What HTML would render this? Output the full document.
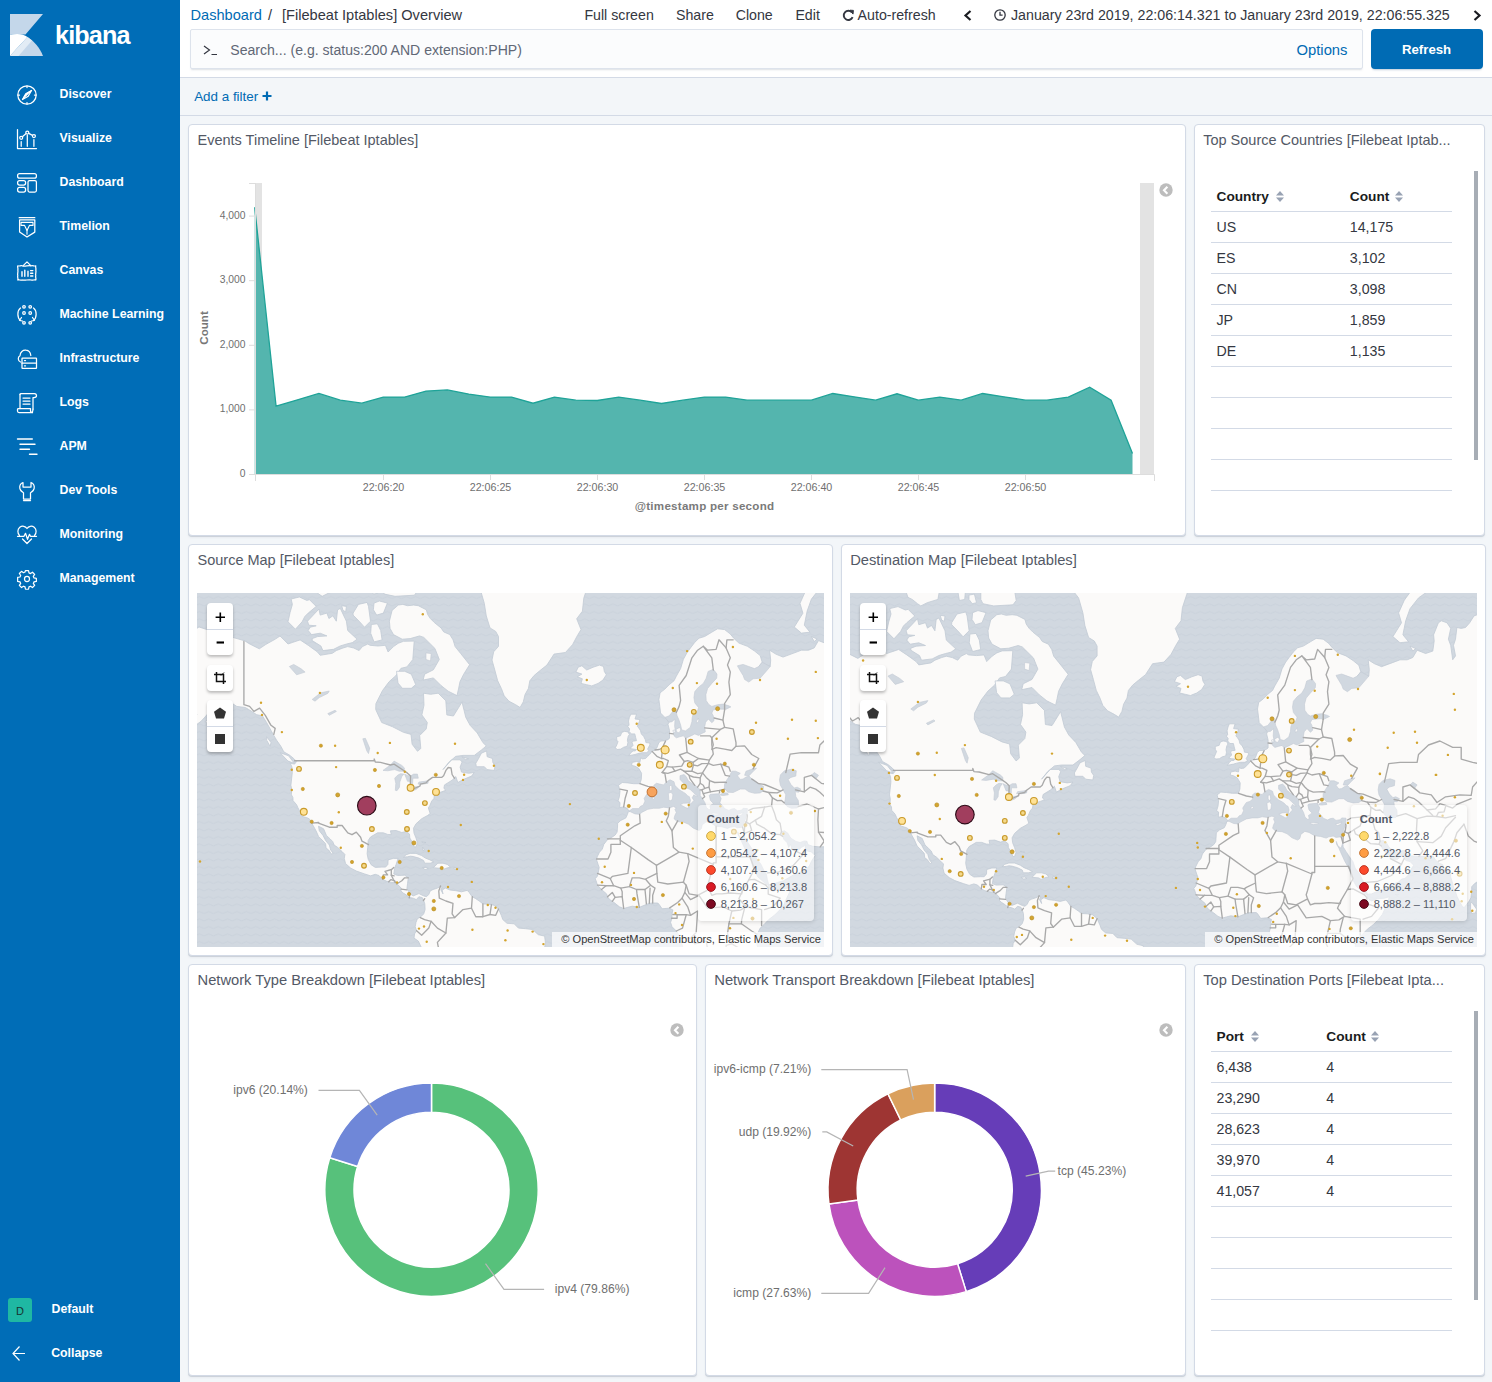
<!DOCTYPE html>
<html><head><meta charset="utf-8"><title>Kibana</title><style>
*{box-sizing:border-box;margin:0;padding:0}
html,body{width:1492px;height:1382px;overflow:hidden;background:#F3F6F9;font-family:"Liberation Sans",sans-serif;color:#343741}
.t{position:absolute;white-space:nowrap;line-height:1}
svg{position:absolute;overflow:visible}
#nav{position:absolute;left:0;top:0;width:180px;height:1382px;background:#006DB7}
#hdr{position:absolute;left:180px;top:0;width:1312px;height:78px;background:#fff;border-bottom:1px solid #D3DAE6}
#fbar{position:absolute;left:180px;top:78px;width:1312px;height:38px;background:#F3F6F9;border-bottom:1px solid #D3DAE6}
.panel{position:absolute;background:#fff;border:1px solid #D3DAE6;border-radius:4px;box-shadow:0 1px 0 rgba(152,162,179,0.35),0 2px 2px rgba(152,162,179,0.12)}
</style></head>
<body>
<div id="hdr"></div>
<div id="fbar"></div>
<div class="t" style="left:190.5px;top:7.64px;font-size:14.6px;color:#006BB4;">Dashboard</div>
<div class="t" style="left:268px;top:7.64px;font-size:14.6px;color:#343741;">/</div>
<div class="t" style="left:282px;top:7.64px;font-size:14.6px;color:#343741;">[Filebeat Iptables] Overview</div>
<div class="t" style="left:584.4px;top:7.98px;font-size:14.2px;color:#343741;">Full screen</div>
<div class="t" style="left:676px;top:7.98px;font-size:14.2px;color:#343741;">Share</div>
<div class="t" style="left:735.7px;top:7.98px;font-size:14.2px;color:#343741;">Clone</div>
<div class="t" style="left:795.4px;top:7.98px;font-size:14.2px;color:#343741;">Edit</div>
<div class="t" style="left:857.6px;top:7.98px;font-size:14.2px;color:#343741;">Auto-refresh</div>
<svg style="left:841.5px;top:8.5px" width="13" height="13" viewBox="0 0 13 13" fill="none" stroke="#343741" stroke-width="1.9"><path d="M10.6 8.2A4.6 4.6 0 1 1 9.9 3.4"/><path d="M8 1.2L11.4 1.4 11 5.1Z" fill="#343741" stroke-width="1"/></svg>
<svg style="left:963px;top:9.5px" width="10" height="11" viewBox="0 0 10 11" fill="none" stroke="#1a1c21" stroke-width="2.2"><path d="M7.5 1L2.5 5.5 7.5 10"/></svg>
<svg style="left:1472px;top:9.5px" width="10" height="11" viewBox="0 0 10 11" fill="none" stroke="#1a1c21" stroke-width="2.2"><path d="M2.5 1L7.5 5.5 2.5 10"/></svg>
<svg style="left:994px;top:9px" width="12" height="12" viewBox="0 0 12 12" fill="none" stroke="#343741" stroke-width="1.3"><circle cx="6" cy="6" r="5.2"/><path d="M6 2.8V6.2H8.6"/></svg>
<div class="t" style="left:1011px;top:7.96px;font-size:14.22px;color:#343741;">January 23rd 2019, 22:06:14.321 to January 23rd 2019, 22:06:55.325</div>
<div style="position:absolute;left:190px;top:29px;width:1173px;height:40px;background:#FBFCFD;border:1px solid #DDE3EC;border-radius:2px;box-shadow:0 2px 2px -1px rgba(152,162,179,0.35)"></div>
<svg style="left:203px;top:45px" width="15" height="10" viewBox="0 0 15 10" fill="none" stroke="#343741" stroke-width="1.2"><path d="M1 1L6.5 5 1 9M8.5 9.5H14"/></svg>
<div class="t" style="left:230.3px;top:43.39px;font-size:14.07px;color:#616876;">Search... (e.g. status:200 AND extension:PHP)</div>
<div class="t" style="left:1296.5px;top:42.97px;font-size:14.8px;color:#006BB4;">Options</div>
<div style="position:absolute;left:1371px;top:29px;width:112px;height:40px;background:#006BB4;border-radius:4px;box-shadow:0 2px 2px -1px rgba(39,87,131,0.3)"></div>
<div class="t" style="left:1402px;top:42.83px;font-size:13.2px;color:#fff;font-weight:bold;">Refresh</div>
<div class="t" style="left:194.2px;top:89.66px;font-size:13.4px;color:#006BB4;">Add a filter</div>
<svg style="left:261.5px;top:90.5px" width="10" height="10" viewBox="0 0 10 10" fill="none" stroke="#006BB4" stroke-width="2.2"><path d="M5 0.5V9.5M0.5 5H9.5"/></svg>
<div id="nav">
<svg style="left:10px;top:14px" width="33" height="42" viewBox="0 0 33 42"><path d="M0 0H33L15.5 20.5C7 20.5 3 20.5 0 21Z" fill="#C4D7EA"/><path d="M0 21C7 19 13.5 20 17.5 23 L0 42Z" fill="#fff"/><path d="M17.5 23C24 27 30 34 33 42H0Z" fill="#C4D7EA"/><path d="M17.5 23L0 42H8.5L22 26.5C20.5 25.2 19 24 17.5 23Z" fill="#E2ECF5"/></svg>
<div class="t" style="left:55px;top:23.27px;font-size:25.2px;color:#fff;font-weight:bold;letter-spacing:-0.85px;">kibana</div>
<svg style="left:17px;top:84.6px" width="20" height="20" viewBox="0 0 20 20" fill="none" stroke="#fff" stroke-width="1.25" stroke-linecap="round" stroke-linejoin="round"><circle cx="10" cy="10" r="9.2"/><path d="M10 1v1.5M10 17.5V19M1 10h1.5M17.5 10H19"/><path d="M14.5 5.5L11.2 11.2 5.5 14.5 8.8 8.8Z" fill="#fff" fill-opacity="0.0"/><path d="M14.5 5.5L8.8 8.8 5.5 14.5Z" fill="#fff" stroke-width="0.8"/></svg>
<div class="t" style="left:59.5px;top:87.59px;font-size:12.3px;color:#fff;font-weight:bold;">Discover</div>
<svg style="left:17px;top:128.6px" width="20" height="20" viewBox="0 0 20 20" fill="none" stroke="#fff" stroke-width="1.25" stroke-linecap="round" stroke-linejoin="round"><path d="M0.5 0.5V19.5H19.5"/><path d="M4.2 12.5V17.3M10.3 6.2V17.3M16.9 10.6V17.3"/><path d="M4.2 8.8L10.3 3.6 16.9 7.1"/><circle cx="4.2" cy="8.8" r="1.5" fill="#006DB7"/><circle cx="10.3" cy="3.6" r="1.5" fill="#006DB7"/><circle cx="16.9" cy="7.1" r="1.5" fill="#006DB7"/></svg>
<div class="t" style="left:59.5px;top:131.59px;font-size:12.3px;color:#fff;font-weight:bold;">Visualize</div>
<svg style="left:17px;top:172.6px" width="20" height="20" viewBox="0 0 20 20" fill="none" stroke="#fff" stroke-width="1.25" stroke-linecap="round" stroke-linejoin="round"><rect x="0.6" y="0.6" width="18.8" height="4.6" rx="2"/><rect x="0.6" y="7.6" width="8" height="4.4" rx="2"/><rect x="0.6" y="14.4" width="8" height="4.6" rx="2"/><rect x="11" y="7.6" width="8.4" height="11.4" rx="1.5"/></svg>
<div class="t" style="left:59.5px;top:175.59px;font-size:12.3px;color:#fff;font-weight:bold;">Dashboard</div>
<svg style="left:17px;top:216.6px" width="20" height="20" viewBox="0 0 20 20" fill="none" stroke="#fff" stroke-width="1.25" stroke-linecap="round" stroke-linejoin="round"><path d="M2.2 0.7h15.6"/><path d="M2.6 2.9h15.2v12.2L10 20 2.6 15.1Z"/><path d="M4 5.4H16V8.4H12.4L10 13.6 7.6 8.4H4Z" stroke-width="1.1"/><path d="M10 13.6V17.2" stroke-width="1.1"/></svg>
<div class="t" style="left:59.5px;top:219.59px;font-size:12.3px;color:#fff;font-weight:bold;">Timelion</div>
<svg style="left:17px;top:260.6px" width="20" height="20" viewBox="0 0 20 20" fill="none" stroke="#fff" stroke-width="1.25" stroke-linecap="round" stroke-linejoin="round"><path d="M6.2 4.6L10 0.9 13.8 4.6"/><path d="M0.8 4.8c1.5 0.8 3-0.8 4.5 0 3 0.9 6-0.9 9 0 1.5-0.8 3 0.8 4.5 0-0.7 1.5 0.7 2.8 0 4.2 0.7 2.2-0.7 4 0 5.8-0.7 1.5 0.7 2.8 0 4.2-1.5-0.8-3 0.8-4.5 0-3-0.9-6 0.9-9 0-1.5 0.8-3-0.8-4.5 0 0.7-1.5-0.7-2.8 0-4.2-0.7-2.2 0.7-4 0-5.8 0.7-1.5-0.7-2.8 0-4.2Z"/><path d="M5 10.7v4.6M7.8 9.1v6.2M11 10.2v5.1M13.6 9.6h2.2M13.6 12.3h2.2M13.6 15h2.2" stroke-width="1.4"/></svg>
<div class="t" style="left:59.5px;top:263.59px;font-size:12.3px;color:#fff;font-weight:bold;">Canvas</div>
<svg style="left:17px;top:304.6px" width="20" height="20" viewBox="0 0 20 20" fill="none" stroke="#fff" stroke-width="1.25" stroke-linecap="round" stroke-linejoin="round"><circle cx="7" cy="1.8" r="1.3"/><circle cx="13.2" cy="1.8" r="1.3"/><circle cx="7" cy="8" r="1.3"/><circle cx="13.2" cy="8" r="1.3"/><circle cx="7" cy="17.8" r="1.3"/><circle cx="13.2" cy="17.8" r="1.3"/><path d="M3.5 3C0 5.5 0 13 3.5 15.5M4.5 12.5L2.5 15.5 5.5 16"/><path d="M16.5 3C20 5.5 20 13 16.5 15.5M15.5 12.5L17.5 15.5 14.5 16"/></svg>
<div class="t" style="left:59.5px;top:307.59px;font-size:12.3px;color:#fff;font-weight:bold;">Machine Learning</div>
<svg style="left:17px;top:348.6px" width="20" height="20" viewBox="0 0 20 20" fill="none" stroke="#fff" stroke-width="1.25" stroke-linecap="round" stroke-linejoin="round"><path d="M3.5 13C0.8 12 0.5 8 3 6.8 3 3 6 0.8 9 1.2 12 1.5 13.5 4 13.8 6.5"/><rect x="5" y="9" width="14.5" height="10.4" rx="0.5"/><path d="M5 14.2h14.5M7.5 11.6h1M7.5 16.8h1"/></svg>
<div class="t" style="left:59.5px;top:351.59px;font-size:12.3px;color:#fff;font-weight:bold;">Infrastructure</div>
<svg style="left:17px;top:392.6px" width="20" height="20" viewBox="0 0 20 20" fill="none" stroke="#fff" stroke-width="1.25" stroke-linecap="round" stroke-linejoin="round"><path d="M3 1.5C3 0.8 3.5 0.5 4 0.5H17.5C18.8 0.5 19.5 1.5 19.5 2.8 19.5 4 18.5 4.5 17 4.5H16V16"/><path d="M3 1.5V15.5"/><path d="M0.5 16.5C0.5 15.8 1 15.5 1.5 15.5H13.5V17.5C13.5 18.5 14.5 19.5 15.5 19.5H2C1 19.5 0.5 18.8 0.5 18Z"/><path d="M16 16C16 18 15 19.5 15.5 19.5"/><path d="M6 5h7M6 8h7M6 11h7"/></svg>
<div class="t" style="left:59.5px;top:395.59px;font-size:12.3px;color:#fff;font-weight:bold;">Logs</div>
<svg style="left:17px;top:436.6px" width="20" height="20" viewBox="0 0 20 20" fill="none" stroke="#fff" stroke-width="1.25" stroke-linecap="round" stroke-linejoin="round"><path d="M0.5 2h14.8M3 7.3h15M3 12.2h9.5M12.5 17.3h7.5" stroke-width="1.4"/></svg>
<div class="t" style="left:59.5px;top:439.59px;font-size:12.3px;color:#fff;font-weight:bold;">APM</div>
<svg style="left:17px;top:480.6px" width="20" height="20" viewBox="0 0 20 20" fill="none" stroke="#fff" stroke-width="1.25" stroke-linecap="round" stroke-linejoin="round"><path d="M6 1.5C3.5 2.5 2.5 5 2.8 7.2 3.2 9.5 5 11 6.5 11.7V18h7v-6.3c1.5-0.7 3.3-2.2 3.7-4.5C17.5 5 16.5 2.5 14 1.5V6H6Z"/><path d="M6.5 19.5h7"/></svg>
<div class="t" style="left:59.5px;top:483.59px;font-size:12.3px;color:#fff;font-weight:bold;">Dev Tools</div>
<svg style="left:17px;top:524.6px" width="20" height="20" viewBox="0 0 20 20" fill="none" stroke="#fff" stroke-width="1.25" stroke-linecap="round" stroke-linejoin="round"><path d="M2.5 10.5C0.3 8.5 0.3 4.2 2.8 2.2 5.3 0.3 8.5 1.2 10 3.5 11.5 1.2 14.7 0.3 17.2 2.2 19.7 4.2 19.7 8.5 17.5 10.5"/><path d="M0.5 11.3h6.5l1.5-3 2 6 2-5 1 2H19.5"/><path d="M5.5 14L10 18.5 14.5 14"/></svg>
<div class="t" style="left:59.5px;top:527.59px;font-size:12.3px;color:#fff;font-weight:bold;">Monitoring</div>
<svg style="left:17px;top:568.6px" width="20" height="20" viewBox="0 0 20 20" fill="none" stroke="#fff" stroke-width="1.25" stroke-linecap="round" stroke-linejoin="round"><g transform="translate(10 10) scale(0.9) translate(-10 -10)"><path d="M8.3 0.6h3.4l0.5 2.6 1.7 0.8 2.2-1.5 2.4 2.4-1.5 2.2 0.8 1.7 2.6 0.5v3.4l-2.6 0.5-0.8 1.7 1.5 2.2-2.4 2.4-2.2-1.5-1.7 0.8-0.5 2.6H8.3l-0.5-2.6-1.7-0.8-2.2 1.5-2.4-2.4 1.5-2.2-0.8-1.7-2.6-0.5V8.3l2.6-0.5 0.8-1.7-1.5-2.2 2.4-2.4 2.2 1.5 1.7-0.8Z" stroke-width="1.35"/><circle cx="10" cy="10" r="2.8" stroke-width="1.35"/></g></svg>
<div class="t" style="left:59.5px;top:571.59px;font-size:12.3px;color:#fff;font-weight:bold;">Management</div>
<div style="position:absolute;left:8px;top:1298px;width:24px;height:24px;border-radius:3px;background:#1FB8A3"></div>
<div class="t" style="left:20px;transform:translateX(-50%);top:1305.69px;font-size:11px;color:#18342F;">D</div>
<div class="t" style="left:51.6px;top:1302.59px;font-size:12.3px;color:#fff;font-weight:bold;">Default</div>
<svg style="left:12px;top:1345px" width="14" height="17" viewBox="0 0 14 17" fill="none" stroke="#fff" stroke-width="1.2"><path d="M13 8.5H1M7.5 1.5L1 8.5 7.5 15.5"/></svg>
<div class="t" style="left:51.2px;top:1346.79px;font-size:12.3px;color:#fff;font-weight:bold;">Collapse</div>
</div>
<div class="panel" style="left:188px;top:124px;width:998px;height:412px"></div><div class="t" style="left:197.5px;top:132.93px;font-size:14.5px;color:#535966;">Events Timeline [Filebeat Iptables]</div>
<div class="panel" style="left:1194px;top:124px;width:291px;height:412px"></div><div class="t" style="left:1203.2px;top:132.93px;font-size:14.5px;color:#535966;">Top Source Countries [Filebeat Iptab...</div>
<div class="panel" style="left:188px;top:544px;width:645px;height:412px"></div><div class="t" style="left:197.5px;top:552.93px;font-size:14.5px;color:#535966;">Source Map [Filebeat Iptables]</div>
<div class="panel" style="left:841px;top:544px;width:645px;height:412px"></div><div class="t" style="left:850.2px;top:552.74px;font-size:14.72px;color:#535966;">Destination Map [Filebeat Iptables]</div>
<div class="panel" style="left:188px;top:964px;width:509px;height:412px"></div><div class="t" style="left:197.5px;top:972.74px;font-size:14.72px;color:#535966;">Network Type Breakdown [Filebeat Iptables]</div>
<div class="panel" style="left:705px;top:964px;width:481px;height:412px"></div><div class="t" style="left:714.2px;top:972.65px;font-size:14.82px;color:#535966;">Network Transport Breakdown [Filebeat Iptables]</div>
<div class="panel" style="left:1194px;top:964px;width:291px;height:412px"></div><div class="t" style="left:1203.2px;top:972.76px;font-size:14.7px;color:#535966;">Top Destination Ports [Filebeat Ipta...</div>
<div style="position:absolute;left:255px;top:183px;width:7px;height:291px;background:#E3E3E3"></div>
<div style="position:absolute;left:1140px;top:183px;width:14px;height:291px;background:#E3E3E3"></div>
<svg style="left:0;top:0" width="1492" height="1382" viewBox="0 0 1492 1382"><path d="M254.7,474 L254.7,207.3 L276.1,406.2 L297.5,399.8 L318.9,393.5 L340.3,400.2 L361.8,403.2 L383.2,397.1 L404.6,397.1 L426.0,391.1 L447.4,389.9 L468.8,394.1 L490.2,397.1 L511.6,397.1 L533.0,403.2 L554.4,397.1 L575.8,400.2 L597.3,400.5 L618.7,397.1 L640.1,400.2 L661.5,403.5 L682.9,400.2 L704.3,397.1 L725.7,397.1 L747.1,400.2 L768.5,400.2 L790.0,400.2 L811.4,400.2 L832.8,393.5 L854.2,396.8 L875.6,400.2 L897.0,393.8 L918.4,400.2 L939.8,397.1 L961.2,400.2 L982.6,393.5 L1004.0,396.8 L1025.5,400.2 L1046.9,400.2 L1068.3,397.1 L1089.7,387.2 L1111.1,400.2 L1132.5,453.4 L1132.5,474Z" fill="#54B5AE"/><polyline points="254.7,207.3 276.1,406.2 297.5,399.8 318.9,393.5 340.3,400.2 361.8,403.2 383.2,397.1 404.6,397.1 426.0,391.1 447.4,389.9 468.8,394.1 490.2,397.1 511.6,397.1 533.0,403.2 554.4,397.1 575.8,400.2 597.3,400.5 618.7,397.1 640.1,400.2 661.5,403.5 682.9,400.2 704.3,397.1 725.7,397.1 747.1,400.2 768.5,400.2 790.0,400.2 811.4,400.2 832.8,393.5 854.2,396.8 875.6,400.2 897.0,393.8 918.4,400.2 939.8,397.1 961.2,400.2 982.6,393.5 1004.0,396.8 1025.5,400.2 1046.9,400.2 1068.3,397.1 1089.7,387.2 1111.1,400.2 1132.5,453.4" fill="none" stroke="#1FA398" stroke-width="1.3"/><path d="M255.5 183V474.5H1154.5V481M249 183.5H255.5" fill="none" stroke="#DDDDDD" stroke-width="1"/></svg>
<svg style="left:0;top:0" width="1492" height="1382" viewBox="0 0 1492 1382" fill="none" stroke="#DDDDDD" stroke-width="1"><path d="M249 474.5H255"/><path d="M249 409.9H255"/><path d="M249 345.3H255"/><path d="M249 280.7H255"/><path d="M249 216.1H255"/><path d="M383.5 474V480"/><path d="M490.5 474V480"/><path d="M597.5 474V480"/><path d="M704.5 474V480"/><path d="M811.5 474V480"/><path d="M918.5 474V480"/><path d="M1025.5 474V480"/><path d="M255.5 474V481"/></svg>
<div class="t" style="right:1246.5px;top:468.98px;font-size:10.3px;color:#6F6F6F;">0</div>
<div class="t" style="right:1246.5px;top:404.38px;font-size:10.3px;color:#6F6F6F;">1,000</div>
<div class="t" style="right:1246.5px;top:339.78px;font-size:10.3px;color:#6F6F6F;">2,000</div>
<div class="t" style="right:1246.5px;top:275.18px;font-size:10.3px;color:#6F6F6F;">3,000</div>
<div class="t" style="right:1246.5px;top:210.58px;font-size:10.3px;color:#6F6F6F;">4,000</div>
<div class="t" style="left:383.5px;transform:translateX(-50%);top:482.44px;font-size:10.7px;color:#6F6F6F;">22:06:20</div>
<div class="t" style="left:490.5px;transform:translateX(-50%);top:482.44px;font-size:10.7px;color:#6F6F6F;">22:06:25</div>
<div class="t" style="left:597.5px;transform:translateX(-50%);top:482.44px;font-size:10.7px;color:#6F6F6F;">22:06:30</div>
<div class="t" style="left:704.5px;transform:translateX(-50%);top:482.44px;font-size:10.7px;color:#6F6F6F;">22:06:35</div>
<div class="t" style="left:811.5px;transform:translateX(-50%);top:482.44px;font-size:10.7px;color:#6F6F6F;">22:06:40</div>
<div class="t" style="left:918.5px;transform:translateX(-50%);top:482.44px;font-size:10.7px;color:#6F6F6F;">22:06:45</div>
<div class="t" style="left:1025.5px;transform:translateX(-50%);top:482.44px;font-size:10.7px;color:#6F6F6F;">22:06:50</div>
<div class="t" style="left:704.5px;transform:translateX(-50%);top:500.28px;font-size:11.6px;color:#7A7A7A;font-weight:bold;letter-spacing:0.25px;">@timestamp per second</div>
<div class="t" style="left:203.5px;top:328.4px;font-size:11.6px;color:#777777;font-weight:bold;transform:translate(-50%,-50%) rotate(-90deg)">Count</div>
<svg style="left:1159.3px;top:182.8px" width="14" height="14" viewBox="0 0 14 14"><circle cx="7" cy="7" r="6.7" fill="#BDBDBD"/><path d="M8.4 3.7L5 7.3l3.4 3.4" fill="none" stroke="#fff" stroke-width="2.1"/></svg>
<div class="t" style="left:1216.5px;top:189.60px;font-size:13.7px;color:#1a1c21;font-weight:bold;">Country</div>
<svg style="left:1275.5px;top:190.7px" width="8" height="11" viewBox="0 0 8 11" fill="#98A2B3"><path d="M4 0L8 4.6H0Z"/><path d="M4 11L8 6.4H0Z"/></svg>
<div class="t" style="left:1349.8px;top:189.60px;font-size:13.7px;color:#1a1c21;font-weight:bold;">Count</div>
<svg style="left:1394.8px;top:190.7px" width="8" height="11" viewBox="0 0 8 11" fill="#98A2B3"><path d="M4 0L8 4.6H0Z"/><path d="M4 11L8 6.4H0Z"/></svg>
<svg style="left:0;top:0" width="1492" height="1382" fill="none" stroke="#D3DAE6" stroke-width="1"><path d="M1211 211.5H1452"/><path d="M1211 242.5H1452"/><path d="M1211 273.5H1452"/><path d="M1211 304.5H1452"/><path d="M1211 335.5H1452"/><path d="M1211 366.5H1452"/><path d="M1211 397.5H1452"/><path d="M1211 428.5H1452"/><path d="M1211 459.5H1452"/><path d="M1211 490.5H1452"/></svg>
<div class="t" style="left:1216.5px;top:220.28px;font-size:14.2px;color:#343741;">US</div>
<div class="t" style="left:1349.8px;top:220.28px;font-size:14.2px;color:#343741;">14,175</div>
<div class="t" style="left:1216.5px;top:251.28px;font-size:14.2px;color:#343741;">ES</div>
<div class="t" style="left:1349.8px;top:251.28px;font-size:14.2px;color:#343741;">3,102</div>
<div class="t" style="left:1216.5px;top:282.28px;font-size:14.2px;color:#343741;">CN</div>
<div class="t" style="left:1349.8px;top:282.28px;font-size:14.2px;color:#343741;">3,098</div>
<div class="t" style="left:1216.5px;top:313.28px;font-size:14.2px;color:#343741;">JP</div>
<div class="t" style="left:1349.8px;top:313.28px;font-size:14.2px;color:#343741;">1,859</div>
<div class="t" style="left:1216.5px;top:344.28px;font-size:14.2px;color:#343741;">DE</div>
<div class="t" style="left:1349.8px;top:344.28px;font-size:14.2px;color:#343741;">1,135</div>
<div style="position:absolute;left:1474px;top:171.0px;width:4px;height:289px;background:#A7ADB5;border-radius:0"></div>
<div class="t" style="left:1216.5px;top:1029.60px;font-size:13.7px;color:#1a1c21;font-weight:bold;">Port</div>
<svg style="left:1251.0px;top:1030.7px" width="8" height="11" viewBox="0 0 8 11" fill="#98A2B3"><path d="M4 0L8 4.6H0Z"/><path d="M4 11L8 6.4H0Z"/></svg>
<div class="t" style="left:1326.3px;top:1029.60px;font-size:13.7px;color:#1a1c21;font-weight:bold;">Count</div>
<svg style="left:1371.3px;top:1030.7px" width="8" height="11" viewBox="0 0 8 11" fill="#98A2B3"><path d="M4 0L8 4.6H0Z"/><path d="M4 11L8 6.4H0Z"/></svg>
<svg style="left:0;top:0" width="1492" height="1382" fill="none" stroke="#D3DAE6" stroke-width="1"><path d="M1211 1051.5H1452"/><path d="M1211 1082.5H1452"/><path d="M1211 1113.5H1452"/><path d="M1211 1144.5H1452"/><path d="M1211 1175.5H1452"/><path d="M1211 1206.5H1452"/><path d="M1211 1237.5H1452"/><path d="M1211 1268.5H1452"/><path d="M1211 1299.5H1452"/><path d="M1211 1330.5H1452"/></svg>
<div class="t" style="left:1216.5px;top:1060.28px;font-size:14.2px;color:#343741;">6,438</div>
<div class="t" style="left:1326.3px;top:1060.28px;font-size:14.2px;color:#343741;">4</div>
<div class="t" style="left:1216.5px;top:1091.28px;font-size:14.2px;color:#343741;">23,290</div>
<div class="t" style="left:1326.3px;top:1091.28px;font-size:14.2px;color:#343741;">4</div>
<div class="t" style="left:1216.5px;top:1122.28px;font-size:14.2px;color:#343741;">28,623</div>
<div class="t" style="left:1326.3px;top:1122.28px;font-size:14.2px;color:#343741;">4</div>
<div class="t" style="left:1216.5px;top:1153.28px;font-size:14.2px;color:#343741;">39,970</div>
<div class="t" style="left:1326.3px;top:1153.28px;font-size:14.2px;color:#343741;">4</div>
<div class="t" style="left:1216.5px;top:1184.28px;font-size:14.2px;color:#343741;">41,057</div>
<div class="t" style="left:1326.3px;top:1184.28px;font-size:14.2px;color:#343741;">4</div>
<div style="position:absolute;left:1474px;top:1011.0px;width:4px;height:289px;background:#A7ADB5;border-radius:0"></div>
<svg style="left:0;top:0" width="1492" height="1382"><path d="M431.50,1083.10 A106.7,106.7 0 1 1 329.74,1157.72 L357.59,1166.50 A77.5,77.5 0 1 0 431.50,1112.30Z" fill="#57C17B" stroke="#fff" stroke-width="1.5"/><path d="M329.74,1157.72 A106.7,106.7 0 0 1 431.50,1083.10 L431.50,1112.30 A77.5,77.5 0 0 0 357.59,1166.50Z" fill="#6F87D8" stroke="#fff" stroke-width="1.5"/><polyline points="318.5,1090.4 359.4,1090.4 377.2,1115.2" fill="none" stroke="#B5B5B5" stroke-width="1.2"/><polyline points="544.1,1289.3 504,1289.3 485.5,1263.7" fill="none" stroke="#B5B5B5" stroke-width="1.2"/></svg>
<div class="t" style="right:1184.1px;top:1084.26px;font-size:12.1px;color:#6F6F6F;">ipv6 (20.14%)</div>
<div class="t" style="left:554.8px;top:1283.16px;font-size:12.1px;color:#6F6F6F;">ipv4 (79.86%)</div>
<svg style="left:669.6px;top:1022.8px" width="14" height="14" viewBox="0 0 14 14"><circle cx="7" cy="7" r="6.7" fill="#BDBDBD"/><path d="M8.4 3.7L5 7.3l3.4 3.4" fill="none" stroke="#fff" stroke-width="2.1"/></svg>
<svg style="left:0;top:0" width="1492" height="1382"><path d="M934.70,1083.00 A106.7,106.7 0 0 1 966.20,1291.64 L957.58,1263.75 A77.5,77.5 0 0 0 934.70,1112.20Z" fill="#663DB8" stroke="#fff" stroke-width="1.5"/><path d="M966.20,1291.64 A106.7,106.7 0 0 1 828.96,1204.00 L857.90,1200.09 A77.5,77.5 0 0 0 957.58,1263.75Z" fill="#BC52BC" stroke="#fff" stroke-width="1.5"/><path d="M828.96,1204.00 A106.7,106.7 0 0 1 887.94,1093.79 L900.74,1120.04 A77.5,77.5 0 0 0 857.90,1200.09Z" fill="#9E3533" stroke="#fff" stroke-width="1.5"/><path d="M887.94,1093.79 A106.7,106.7 0 0 1 934.63,1083.00 L934.65,1112.20 A77.5,77.5 0 0 0 900.74,1120.04Z" fill="#DAA05D" stroke="#fff" stroke-width="1.5"/><polyline points="821.3,1069.6 907.1,1069.6 913.5,1099.7" fill="none" stroke="#B5B5B5" stroke-width="1.2"/><polyline points="822.3,1131.9 826.7,1131.9 853.2,1146" fill="none" stroke="#B5B5B5" stroke-width="1.2"/><polyline points="1055.2,1171.1 1048.5,1171.1 1025.7,1176.2" fill="none" stroke="#B5B5B5" stroke-width="1.2"/><polyline points="821.3,1293.4 868.6,1293.4 885,1267.6" fill="none" stroke="#B5B5B5" stroke-width="1.2"/></svg>
<div class="t" style="right:680.7px;top:1063.46px;font-size:12.1px;color:#6F6F6F;">ipv6-icmp (7.21%)</div>
<div class="t" style="right:680.7px;top:1125.76px;font-size:12.1px;color:#6F6F6F;">udp (19.92%)</div>
<div class="t" style="left:1057.6px;top:1164.96px;font-size:12.1px;color:#6F6F6F;">tcp (45.23%)</div>
<div class="t" style="right:680.7px;top:1287.26px;font-size:12.1px;color:#6F6F6F;">icmp (27.63%)</div>
<svg style="left:1158.8px;top:1022.9000000000001px" width="14" height="14" viewBox="0 0 14 14"><circle cx="7" cy="7" r="6.7" fill="#BDBDBD"/><path d="M8.4 3.7L5 7.3l3.4 3.4" fill="none" stroke="#fff" stroke-width="2.1"/></svg>
<svg width="0" height="0" style="left:0;top:0"><defs><pattern id="waves" width="9.4" height="7.5" patternUnits="userSpaceOnUse"><path d="M0 4.5 Q2.35 2.5 4.7 4.5 T9.4 4.5" fill="none" stroke="#C4CCD6" stroke-width="0.9" opacity="0.6"/></pattern><g id="world"><g fill="#FBFAF9" stroke="#C2CAD4" stroke-width="0.8"><path d="M34.1,262.4L39.8,238.1L51.2,227.5L66.0,218.0L79.6,222.4L96.7,227.5L110.9,231.6L110.9,231.2L115.6,234.4L126.3,239.8L132.7,235.5L142.4,230.1L147.0,227.0L151.0,230.9L155.0,235.0L159.1,233.6L167.1,230.9L175.2,236.3L184.5,243.0L187.2,246.3L199.3,244.3L203.3,241.6L210.0,239.0L214.7,237.6L220.7,239.0L226.1,241.6L229.4,237.6L234.8,235.0L237.0,236.3L245.0,237.0L252.4,236.3L255.1,243.0L260.5,237.6L265.2,234.3L270.5,232.3L281.2,232.1L279.8,250.5L273.9,257.9L268.0,259.3L262.8,266.7L256.2,272.6L249.5,281.5L242.9,294.7L242.7,300.5L248.7,313.5L259.6,317.8L270.4,323.3L278.0,325.4L279.1,335.2L284.5,342.3L287.8,339.5L286.7,326.5L293.2,320.0L294.3,313.5L288.9,305.9L291.0,296.1L290.5,284.2L297.6,285.3L305.2,284.2L312.8,291.8L313.8,305.9L320.4,307.0L325.8,298.3L329.0,293.0L332.8,308.4L337.1,316.3L344.2,323.9L349.9,333.6L353.3,336.9L348.4,341.0L341.3,346.4L330.0,346.4L322.8,347.3L315.7,353.4L310.0,360.6L318.6,350.8L327.1,350.8L329.1,353.0L327.1,358.1L328.5,363.1L335.6,364.3L341.3,363.5L338.5,367.1L331.4,370.0L324.8,373.5L322.8,367.6L319.1,371.2L311.5,375.9L310.9,379.4L312.9,381.3L308.6,382.8L301.5,385.4L300.9,389.5L298.7,392.1L296.7,396.8L295.3,398.9L297.2,404.6L294.4,406.6L288.7,409.7L283.0,414.8L280.5,419.2L281.0,424.1L283.0,429.0L284.4,433.8L283.0,437.9L281.3,437.9L279.3,433.1L276.8,429.0L276.5,425.1L273.1,422.5L268.8,423.5L263.1,421.5L257.4,421.8L258.3,425.7L254.6,425.4L250.3,423.8L244.6,423.8L237.5,428.0L235.2,431.5L234.7,438.5L234.1,444.7L235.2,450.3L238.1,455.7L242.3,458.4L248.9,458.1L252.6,458.1L254.9,455.4L255.1,450.9L260.3,449.4L265.1,449.4L263.1,455.4L261.7,459.0L260.8,465.0L264.5,466.5L271.6,466.2L275.3,468.8L274.5,474.7L273.9,479.9L277.3,484.9L280.2,486.9L285.9,484.6L290.7,486.9L293.5,487.7L295.8,485.4L297.2,482.0L300.1,480.5L304.4,479.1L307.2,477.6L309.2,478.5L307.8,480.8L310.0,484.9L309.2,481.1L312.3,479.1L317.2,481.1L322.8,481.7L328.5,482.8L334.2,481.4L336.2,483.4L339.1,487.7L342.8,489.7L347.0,492.6L349.9,494.9L355.6,495.2L361.2,496.3L365.5,500.0L368.4,506.6L369.8,510.6L374.0,514.3L381.2,514.8L385.4,519.1L392.5,519.7L399.6,520.5L405.3,525.7L411.6,527.1L412.4,533.4L411.6,539.1L406.8,544.9L402.5,550.8L341.3,552.2L291.6,552.2L294.4,549.3L292.4,546.4L288.7,539.1L285.3,532.0L281.0,529.1L281.6,524.8L283.6,521.7L282.2,517.7L283.0,513.4L284.4,509.7L287.9,507.7L290.7,504.9L292.1,500.6L291.8,494.9L290.7,491.5L289.3,488.6L285.9,487.7L283.3,490.6L280.2,489.2L275.9,488.3L273.9,486.3L270.2,484.0L267.9,482.0L268.2,479.1L264.5,475.3L263.1,473.8L257.4,473.2L253.2,472.1L249.7,470.3L246.0,466.5L242.3,465.3L237.5,466.8L231.8,465.0L223.3,462.0L217.6,459.0L212.5,454.5L211.3,449.4L211.9,445.4L209.1,442.6L204.8,438.5L201.1,436.0L199.7,432.5L197.1,429.9L193.4,426.4L190.6,419.8L185.5,417.2L186.3,421.8L190.0,426.4L192.6,431.5L196.3,436.0L197.7,441.0L200.2,444.4L198.5,445.1L195.7,441.0L193.1,439.1L192.6,434.7L187.7,429.6L185.5,427.4L182.9,421.5L180.1,416.5L178.6,413.8L176.9,410.4L174.9,409.1L169.0,407.3L167.8,403.9L165.0,398.9L163.6,395.7L160.1,391.7L159.9,388.4L158.4,385.8L158.7,380.1L157.9,376.3L159.3,363.5L159.0,358.1L157.3,354.3L161.6,355.1L163.6,352.5L160.7,349.5L156.4,346.0L150.8,342.8L147.9,337.3L143.6,331.2L140.8,326.4L138.0,321.4L133.7,313.7L129.4,306.8L123.7,305.7L118.0,301.9L112.4,298.5L103.8,297.4L96.7,292.8L89.6,295.7L85.3,300.2L81.1,301.9L79.6,294.5L81.1,291.6L76.8,300.2L74.0,305.7L68.3,312.1L62.6,316.3L56.9,319.9L51.2,322.9L44.1,326.4L51.2,319.9L55.5,316.3L61.2,311.1L64.0,305.2L59.7,303.5L52.6,305.2L50.6,298.5L44.1,294.5L41.2,288.6L39.8,282.6L44.1,278.2L51.2,276.3L54.0,269.8L46.9,269.8L39.8,269.2L37.0,265.1L34.1,262.4Z"/><path d="M158.1,190.0L166.4,188.0L173.8,191.4L176.5,190.7L183.2,197.4L175.2,204.1L171.8,207.5L169.1,212.8L162.4,220.2L155.0,212.8L157.1,203.4L159.4,195.4Z"/><path d="M174.5,212.2L185.9,200.1L187.2,206.1L193.9,204.1L195.9,209.5L199.9,206.8L203.3,212.2L204.6,200.8L207.3,199.4L213.4,212.2L214.7,221.5L224.1,230.2L219.4,233.6L214.0,234.9L207.3,236.9L200.6,240.3L189.9,241.6L187.9,237.0L179.2,231.6L179.2,229.6L184.5,227.6L193.9,226.9L187.2,224.2L178.5,225.6L175.2,221.5L177.2,218.2L183.2,216.8L175.8,216.2Z"/><path d="M173.1,169.0L208.5,169.0L206.3,180.8L195.6,184.1L189.2,187.3L185.9,185.1L180.6,180.8L176.3,178.7Z"/><path d="M208.7,196.7L213.4,197.4L212.7,202.8L210.0,201.4Z"/><path d="M220.1,204.1L225.4,195.4L234.1,193.4L235.5,197.4L237.5,212.2L231.5,218.2L226.1,212.2L220.1,206.1Z"/><path d="M241.0,194.1L246.4,192.0L254.4,194.1L250.4,204.1L243.7,206.1L240.4,200.8Z"/><path d="M238.3,215.5L244.4,214.8L247.7,221.5L249.1,230.9L241.0,232.9L237.7,224.2Z"/><path d="M249.2,169.0L282.5,169.0L284.6,181.9L281.4,186.2L262.1,187.3L251.3,185.1L249.2,180.8Z"/><path d="M225.6,169.0L234.2,169.0L233.1,180.8L227.8,181.9Z"/><path d="M237.4,176.5L242.8,175.5L244.9,184.1L240.6,185.1L237.4,180.8Z"/><path d="M256.4,212.2L259.1,201.4L265.2,196.1L269.8,195.4L274.5,196.7L280.6,196.1L285.3,196.7L293.3,200.8L294.6,205.4L297.3,209.5L301.3,213.5L308.0,218.9L310.7,222.9L316.8,225.6L320.1,230.9L322.1,237.6L327.5,244.3L336.6,255.7L330.7,265.2L327.0,272.6L325.5,280.0L324.0,286.6L315.2,282.2L307.8,276.3L300.4,268.9L290.1,271.1L291.6,265.2L300.4,260.8L306.3,250.5L301.9,239.4L290.8,228.4L286.6,226.9L277.2,229.6L269.2,230.2L260.5,225.6L257.1,219.5Z"/><path d="M263.5,262.3L271.7,262.3L278.3,265.2L282.7,275.6L278.3,279.3L269.4,279.3L265.0,274.1Z"/><path d="M387.1,298.5L382.6,295.7L376.0,292.2L371.2,286.8L368.4,279.5L364.7,271.8L361.8,261.0L359.0,251.0L360.7,242.8L365.5,237.3L365.5,227.5L362.7,222.4L357.0,218.9L353.3,207.0L351.3,194.3L347.0,179.3L339.9,170.2L328.5,166.6L317.2,163.0L308.6,154.2L304.4,142.1L312.9,127.6L324.3,111.6L341.3,88.4L369.8,72.2L398.2,51.9L426.7,44.5L455.1,67.9L472.2,88.4L463.6,115.0L458.0,137.9L460.8,158.0L455.1,176.0L450.8,189.1L449.4,202.2L443.7,209.8L448.0,220.6L444.3,226.7L439.5,235.7L432.4,243.5L421.0,245.1L413.9,256.1L406.8,261.7L401.1,266.5L396.8,271.8L395.4,279.5L392.0,285.6L390.3,292.8L387.1,298.5Z"/><path d="M442.9,263.1L445.2,258.2L448.9,256.8L453.7,261.0L460.2,258.2L466.5,256.1L470.5,257.5L471.3,262.4L473.3,265.8L469.9,271.1L465.1,274.4L458.8,276.9L453.7,275.7L448.0,274.4L449.4,269.8L444.3,267.8L448.9,265.1L442.9,263.1Z"/><path d="M343.3,357.7L351.3,357.7L354.1,360.6L361.2,361.4L362.1,356.8L359.8,353.4L359.5,349.5L354.1,347.7L353.6,341.9L348.4,344.2L345.6,349.5L342.8,354.3L343.3,357.7Z"/><path d="M328.8,347.7L335.6,349.9L332.8,350.8L328.8,347.7Z"/><path d="M147.1,343.7L155.6,346.8L161.3,354.3L155.0,352.1L147.1,343.7Z"/><path d="M133.7,327.8L138.0,333.6L137.1,337.3L133.7,331.2L133.7,327.8Z"/><path d="M71.7,312.7L79.1,309.5L75.4,314.8L71.7,312.7Z"/><path d="M270.5,448.1L273.1,445.7L277.3,444.4L283.0,444.4L288.7,446.6L292.4,449.1L297.0,450.9L300.9,453.0L297.2,454.2L291.6,454.2L290.7,451.5L285.9,449.1L280.2,447.5L277.3,447.2L274.5,447.8L270.5,448.1Z"/><path d="M300.4,458.7L304.9,454.2L310.0,454.2L314.3,455.4L317.4,458.1L312.9,459.3L309.5,460.8L307.2,459.3L300.4,458.7Z"/><path d="M289.3,458.7L293.0,458.4L295.3,459.9L292.1,460.5L289.3,458.7Z"/><path d="M320.9,458.4L325.4,458.7L324.8,459.9L320.9,459.9L320.9,458.4Z"/><path d="M288.7,432.8L293.0,433.5L290.7,433.8L288.7,432.8Z"/><path d="M289.6,438.2L291.6,440.7L290.1,441.6L289.6,438.2Z"/><path d="M496.1,402.1L494.1,399.3L490.7,397.9L486.7,398.6L487.0,393.5L485.0,392.1L486.4,387.7L487.0,382.0L485.5,376.3L489.2,373.5L494.9,373.9L500.6,374.7L506.9,374.7L508.3,370.4L508.6,364.3L505.7,359.3L502.0,357.2L498.6,356.4L499.2,353.4L503.5,352.5L506.9,353.4L507.7,348.6L509.2,349.9L512.6,349.5L514.8,347.3L516.6,345.5L519.1,342.4L522.0,341.0L523.9,338.7L525.7,334.0L527.6,332.1L531.6,331.7L534.8,330.7L536.5,329.3L536.5,321.4L535.0,315.3L535.9,313.2L531.9,308.4L527.6,304.1L526.8,297.4L525.9,290.4L527.1,283.8L531.9,280.1L536.2,275.7L541.0,271.8L543.3,267.2L547.6,259.6L550.4,250.3L554.1,243.5L557.5,238.9L561.8,233.3L566.0,229.2L571.7,227.5L578.8,223.2L584.5,219.8L591.6,220.6L597.3,225.0L600.7,229.2L605.9,234.1L614.4,237.3L621.5,242.0L627.2,246.6L629.2,253.2L625.8,257.5L637.2,257.5L637.7,251.0L636.6,241.2L642.8,245.1L650.0,248.1L664.2,242.8L668.4,241.2L675.6,241.2L681.2,238.9L685.5,231.6L694.0,234.9L701.2,232.5L702.6,222.4L702.0,216.2L706.8,204.2L709.7,202.2L715.4,204.2L719.1,209.8L716.8,220.6L719.1,226.7L721.1,241.2L723.9,237.3L721.9,226.7L723.9,220.6L725.3,208.9L729.6,209.8L733.9,208.9L738.1,204.2L742.4,197.3L756.6,192.2L759.5,181.6L773.7,176.0L796.4,164.2L796.4,465.9L780.8,465.9L776.5,456.9L774.5,450.9L772.3,446.3L769.4,447.2L766.6,448.1L763.7,448.4L759.5,449.4L758.0,453.3L753.8,455.4L749.5,459.9L746.1,462.9L743.0,465.0L740.1,468.2L740.1,473.2L739.3,479.1L737.6,482.5L734.4,486.6L732.7,488.9L731.0,488.3L728.2,483.4L725.3,477.6L723.9,473.2L721.9,468.8L720.5,462.9L719.1,458.4L719.1,453.9L716.8,450.9L712.5,450.9L711.1,446.0L707.7,444.7L704.0,441.6L701.2,437.3L694.0,437.6L686.9,437.9L679.8,437.3L675.0,435.7L673.8,432.2L672.1,434.4L672.4,440.1L674.7,442.0L678.4,442.9L682.1,446.6L678.4,452.4L676.4,456.9L673.3,459.9L669.9,460.5L667.0,463.5L660.5,465.9L655.6,468.8L650.5,471.8L644.3,473.5L640.0,475.3L635.4,475.6L635.2,479.1L640.0,482.3L645.7,480.2L652.8,479.6L657.6,478.2L656.5,483.4L653.7,489.2L650.8,495.8L647.1,500.6L641.4,506.3L635.7,510.6L630.9,515.7L627.2,519.1L623.8,526.2L623.8,534.8L625.8,542.0L626.6,546.4L627.2,555.2L549.0,555.2L547.6,549.3L550.4,543.5L549.5,537.1L547.0,529.1L546.1,526.2L543.3,522.0L539.0,517.7L537.6,513.4L539.0,509.2L539.0,504.9L539.9,500.9L536.2,499.2L531.9,499.5L529.1,499.8L526.2,495.5L524.8,494.0L519.1,494.0L516.3,494.3L512.0,496.0L506.3,498.3L499.2,497.2L494.9,498.3L490.7,499.5L486.4,497.8L482.1,494.3L479.3,492.3L476.4,490.3L474.5,487.7L473.6,484.9L470.8,482.5L468.5,480.5L464.5,476.2L463.1,471.8L462.2,469.7L464.2,467.4L465.1,464.4L466.2,458.4L465.1,455.4L463.6,450.9L464.2,447.8L466.5,443.2L469.3,440.1L470.8,435.4L474.5,430.6L477.9,429.0L482.1,426.1L484.1,423.1L484.4,419.8L484.7,414.2L487.8,411.4L492.7,409.1L494.4,405.6L495.2,402.8L496.9,402.5Z"/><path d="M495.8,346.8L499.2,346.0L502.0,345.5L504.9,344.6L509.2,343.7L513.4,343.7L516.0,341.9L514.6,340.1L516.8,335.9L516.8,334.0L512.9,333.6L512.3,330.7L510.6,327.3L508.3,324.9L507.4,321.4L505.7,318.9L504.3,317.3L506.3,312.7L506.9,310.6L502.0,310.0L503.5,305.2L497.8,305.2L496.4,308.4L495.5,312.1L496.1,316.3L494.6,317.3L496.6,319.9L496.1,322.4L498.3,324.9L501.8,324.9L502.6,328.3L503.5,331.7L500.6,332.1L498.9,333.1L500.1,336.4L498.3,338.2L497.2,339.6L500.1,340.1L503.5,340.5L502.3,341.9L500.1,341.9L497.8,343.7L495.8,346.8Z"/><path d="M494.1,337.3L494.9,333.6L494.4,331.2L495.2,327.3L496.4,325.4L494.9,322.9L491.5,322.4L488.7,323.4L487.5,326.8L483.6,327.8L483.8,331.2L485.0,332.6L483.8,335.9L482.4,338.7L484.1,340.5L487.8,340.1L490.7,338.2L494.1,337.3Z"/><path d="M661.3,218.0L669.9,204.2L667.0,194.3L672.7,181.6L682.7,167.8L694.0,161.8L706.8,158.0L699.7,170.2L686.9,179.3L678.4,190.1L674.1,202.2L671.3,216.2L677.0,223.2L668.4,224.1L661.3,218.0Z"/><path d="M678.4,227.5L684.1,230.0L681.2,232.5L678.4,227.5Z"/><path d="M739.0,484.0L740.4,484.0L745.0,490.6L743.8,494.3L740.1,494.9L739.0,490.6L739.0,484.0Z"/><path d="M663.6,475.9L667.0,475.9L665.6,477.0L663.6,475.9Z"/><path d="M543.3,130.6L560.4,111.6L583.1,108.3L588.8,130.6L571.7,151.6L554.7,158.0L543.3,130.6Z"/></g><g fill="#D1D8E0" stroke="#C2CAD4" stroke-width="0.6"><path d="M496.1,402.1L499.5,399.6L505.7,399.6L507.7,397.1L510.0,396.4L512.0,392.1L511.1,389.5L513.4,385.8L514.8,383.9L518.3,382.8L521.1,380.5L520.8,376.3L523.4,374.3L526.8,375.1L530.5,375.9L533.3,373.1L537.0,370.8L541.0,372.7L541.9,376.3L543.9,378.6L547.0,381.3L550.4,383.2L552.7,384.7L554.7,386.9L556.4,387.7L557.5,391.4L556.7,394.3L557.8,395.0L559.2,393.2L560.9,391.4L559.2,388.8L560.9,385.8L563.2,387.3L564.6,387.3L560.4,383.5L557.2,380.5L552.7,378.6L550.7,374.3L547.0,370.4L547.0,366.7L551.0,365.5L553.2,367.6L555.2,371.6L558.6,374.3L562.1,376.3L564.6,378.2L567.2,380.9L567.2,386.5L569.5,389.5L572.0,393.9L573.4,398.6L576.0,400.7L577.7,400.3L576.9,396.8L579.4,395.3L580.3,394.3L577.4,391.4L576.3,386.5L577.1,385.4L580.3,385.1L586.0,384.7L586.8,386.9L588.2,389.5L586.8,393.9L589.7,396.8L591.6,399.6L595.9,401.4L598.8,400.0L601.6,399.6L604.4,401.8L608.7,401.1L610.1,399.3L614.4,399.6L614.1,405.6L613.0,408.4L611.6,412.5L610.1,416.5L609.6,418.2L604.4,418.8L601.6,417.5L597.3,418.2L594.5,419.5L588.8,417.8L583.1,417.2L577.4,413.8L573.2,412.8L569.2,415.8L568.3,419.8L566.0,421.5L560.4,419.2L555.5,415.2L550.4,413.1L546.1,412.8L543.3,411.8L541.0,409.7L541.9,406.3L543.3,403.5L541.9,400.3L543.3,398.9L540.4,397.5L536.2,398.9L530.5,398.2L526.2,399.3L520.5,399.3L514.8,400.3L509.2,403.2L506.3,405.3L502.0,404.9L496.9,402.5Z"/><path d="M594.8,383.2L600.2,383.5L607.3,380.1L612.1,380.1L615.8,382.8L621.5,384.3L627.2,383.9L630.0,382.0L630.6,377.4L625.8,374.7L621.5,371.2L618.1,369.2L616.1,367.1L613.0,368.0L610.1,370.0L607.3,370.4L604.4,366.7L607.3,364.3L602.5,362.2L598.8,362.2L596.5,367.1L593.9,370.8L591.6,375.1L591.4,379.4L594.8,383.2Z"/><path d="M611.6,366.3L616.1,366.7L620.7,361.8L623.5,359.3L620.1,359.8L613.0,362.2L611.6,366.3Z"/><path d="M587.4,386.2L590.2,386.5L595.3,385.8L594.5,383.9L590.2,383.9L587.4,385.4L587.4,386.2Z"/><path d="M651.4,361.8L647.4,365.9L646.5,371.2L647.4,376.3L650.2,380.9L652.8,385.8L652.2,390.6L651.4,393.9L654.2,397.5L658.5,399.3L664.2,398.9L665.6,396.8L665.3,391.4L662.8,387.7L662.2,382.8L665.6,383.2L667.9,380.1L664.2,378.2L661.3,379.0L657.9,375.5L655.1,370.4L657.9,368.4L662.8,367.1L663.3,361.8L658.5,360.2L651.4,361.8Z"/><path d="M678.4,366.3L682.7,370.0L685.5,366.3L681.2,363.5L678.4,366.3Z"/><path d="M604.7,422.8L605.0,425.7L607.3,429.6L608.7,432.8L613.0,442.3L616.1,447.8L618.1,451.5L619.8,458.4L622.4,463.5L624.9,468.0L629.2,471.8L632.6,474.7L635.2,476.2L635.7,475.3L634.3,470.3L633.5,465.3L630.9,461.4L628.1,455.4L623.5,449.4L621.5,443.2L618.1,438.5L614.4,432.8L611.6,428.3L611.3,424.1L610.1,427.4L609.6,429.6L606.4,427.4L604.7,422.8Z"/><path d="M672.1,434.4L671.3,436.9L668.4,438.5L665.6,441.0L661.3,441.0L658.8,440.4L657.6,435.4L655.6,438.5L654.2,433.8L650.8,430.3L648.8,424.8L648.5,422.5L651.4,421.8L654.8,424.1L657.1,428.0L658.5,429.6L662.8,432.2L667.0,433.5L671.3,431.9L673.8,432.2L672.1,434.4Z"/><path d="M531.9,308.4L536.2,306.8L539.3,303.0L541.9,299.1L543.3,303.0L544.1,306.8L545.8,310.6L547.6,315.8L548.7,320.9L552.4,321.9L557.2,318.4L558.9,312.7L559.2,308.4L560.4,304.6L564.6,301.9L565.5,298.5L561.8,293.9L560.9,288.6L561.8,282.6L565.5,278.2L570.3,274.4L573.2,269.2L575.1,262.4L580.3,260.3L584.0,265.1L583.7,269.2L578.8,274.4L574.6,279.5L572.9,285.6L573.2,291.6L576.0,295.7L578.8,297.4L584.5,295.7L590.2,295.1L595.9,296.8L597.9,297.9L593.1,300.2L587.4,300.2L580.3,300.8L578.8,304.1L580.3,306.8L581.1,311.6L578.8,313.7L575.4,310.0L572.6,313.2L571.7,317.8L572.3,322.9L568.9,324.4L565.5,326.4L561.8,324.9L558.9,326.4L552.7,329.3L550.4,326.8L546.7,327.8L543.3,328.8L541.0,326.8L540.4,323.9L542.4,321.4L541.6,317.3L541.9,312.7L541.9,310.0L539.0,312.7L535.9,313.2L531.9,308.4Z"/><path d="M604.4,256.8L610.1,255.4L615.8,257.5L621.5,259.6L625.8,257.5L629.2,253.2L637.2,257.5L634.3,261.0L627.2,269.2L620.1,269.8L615.8,273.1L611.6,270.5L610.1,266.5L605.9,259.6L604.4,256.8Z"/><path d="M293.0,243.9L298.2,244.6L297.5,252.0L293.0,250.5Z" fill="#FBFAF9"/><path d="M250.0,361.4L254.6,361.8L261.7,360.6L266.0,362.2L271.1,362.2L271.4,358.9L268.8,356.4L261.1,352.1L257.4,356.0L250.0,361.4Z"/><path d="M262.3,381.3L264.0,381.7L266.5,378.2L266.8,373.1L268.8,367.6L270.8,365.1L267.4,364.7L264.5,366.3L261.7,369.2L262.8,374.3L262.3,381.3Z"/><path d="M271.6,365.1L274.8,366.7L277.3,367.1L280.7,365.1L284.4,365.1L285.3,369.2L279.9,369.2L279.6,374.7L277.6,376.3L277.3,372.3L274.5,372.3L271.6,365.1Z"/><path d="M274.8,381.3L278.8,382.0L283.0,380.5L287.3,377.0L283.6,377.8L280.2,377.8L275.6,379.7L274.8,381.3Z"/><path d="M285.0,375.1L290.1,375.1L295.0,374.3L295.3,371.6L291.6,372.3L285.9,373.1L285.0,375.1Z"/><path d="M229.8,329.8L232.4,329.3L236.7,339.2L235.5,344.6L233.8,341.9L229.8,329.8Z"/><path d="M156.4,257.5L160.7,255.4L167.8,259.6L172.1,263.1L163.6,265.8L156.4,257.5Z"/><path d="M179.2,290.4L187.7,283.8L196.3,282.0L194.8,284.4L186.3,288.6L182.0,292.2L179.2,290.4Z"/><path d="M194.8,304.6L202.0,301.3L203.4,302.4L196.3,306.3L194.8,304.6Z"/></g><g fill="#FBFAF9" stroke="#C2CAD4" stroke-width="0.6"><path d="M547.3,395.7L550.4,394.3L556.4,393.9L555.0,399.6L552.7,398.6L547.3,395.7Z"/><path d="M535.3,384.3L538.2,383.2L539.9,385.8L539.3,390.6L537.3,391.7L535.9,391.4L535.3,384.3Z"/><path d="M536.5,376.7L538.7,376.3L539.0,380.1L538.2,382.4L536.5,380.5L536.5,376.7Z"/><path d="M578.8,403.9L581.7,404.2L586.8,404.6L586.0,405.6L581.7,406.0L578.8,404.9L578.8,403.9Z"/><path d="M603.9,405.6L607.3,404.6L610.4,403.2L608.7,406.0L605.6,407.0L603.9,405.6Z"/><path d="M518.8,389.1L521.1,388.0L522.0,389.1L520.2,390.3L518.8,389.1Z"/><path d="M543.0,320.4L546.7,318.4L547.8,320.9L546.1,323.9L543.6,322.9L543.0,320.4Z"/><path d="M539.9,321.4L541.9,320.9L542.4,323.4L540.4,323.4L539.9,321.4Z"/><path d="M563.5,312.1L565.5,309.0L565.8,312.1L564.1,314.2L563.5,312.1Z"/></g><g fill="none" stroke="#A9A9A9" stroke-width="1.35" stroke-linejoin="round" stroke-linecap="round"><path d="M161.6,351.7L241.2,351.7L241.2,349.9L242.3,353.0L247.5,353.4L257.4,356.0L261.1,355.1L271.1,361.8L274.2,363.9L277.6,367.1L277.3,376.3L275.6,379.7L277.3,380.9L281.6,379.4L287.0,377.0L287.3,375.1L293.0,373.9L295.0,371.6L299.5,368.4L308.6,368.4L310.6,366.7L312.9,361.4L315.2,358.5L318.0,358.9L319.1,365.5L321.4,369.2"/><path d="M110.9,232.5L110.9,295.7L116.6,297.4L120.9,302.4L126.6,299.1L132.3,306.3L138.0,316.3L142.2,319.4L140.8,325.4"/><path d="M178.9,414.2L185.7,413.5L185.5,414.2L196.3,418.2L204.2,418.2L204.2,416.5L209.1,416.5L214.8,423.8L219.0,425.7L223.3,423.1L227.6,428.3L229.0,432.2L235.5,435.7"/><path d="M249.7,470.3L250.3,465.9L254.6,465.9L252.0,462.3L258.6,460.5L260.8,458.4"/><path d="M258.3,460.5L258.3,466.2L261.1,466.8"/><path d="M255.7,472.7L258.0,470.6L261.7,471.8L262.3,473.5"/><path d="M258.3,466.2L260.3,470.3L262.3,473.5"/><path d="M263.7,475.0L268.8,471.8L271.6,468.8L275.3,468.8"/><path d="M268.2,480.2L273.9,480.8"/><path d="M276.2,488.9L277.0,484.6"/><path d="M291.8,489.7L290.4,491.5"/><path d="M307.5,477.0L305.8,482.0L306.3,489.2L312.9,492.0L320.0,494.3L319.1,504.9L321.7,508.6L314.3,509.2L312.9,524.0"/><path d="M287.3,508.6L291.6,510.6L298.1,512.3L304.4,519.1L312.9,524.0L304.4,533.4L305.8,540.6L314.3,543.5"/><path d="M283.6,521.7L288.7,526.2L295.8,519.1L298.1,512.3"/><path d="M321.7,508.6L330.0,500.6L338.5,499.2L339.3,487.7"/><path d="M338.5,499.2L342.8,507.7L349.9,507.7L349.9,494.9"/><path d="M349.9,507.7L357.0,505.5L358.4,495.8"/><path d="M357.0,505.5L362.7,506.3L365.5,500.0"/><path d="M506.9,374.7L514.8,377.4L521.1,378.6"/><path d="M487.0,380.1L494.4,381.7L492.1,389.5L490.7,397.9"/><path d="M519.1,342.4L523.9,347.3L528.5,349.5L530.5,349.5L535.3,351.7L533.6,357.7L529.1,363.5L531.9,364.7L533.3,373.1"/><path d="M522.0,341.0L526.2,340.5L529.1,339.2L532.5,332.1"/><path d="M528.5,349.5L529.1,343.7L529.1,339.2"/><path d="M536.5,324.4L540.2,324.9"/><path d="M552.7,329.3L554.1,343.3L546.4,346.0L551.3,352.5L548.7,357.2L539.3,358.1L533.6,357.7"/><path d="M539.3,358.1L541.9,362.2L547.6,360.2L551.0,362.2L558.9,362.2L560.4,356.0L560.1,353.4L554.7,351.7L551.3,352.5"/><path d="M529.1,363.5L534.8,364.3L541.9,362.2"/><path d="M554.1,343.3L558.9,346.0L565.5,349.5L576.3,351.2L580.3,345.1L578.8,335.9L578.8,328.8L576.9,326.8L567.5,326.8"/><path d="M560.1,353.4L565.5,349.5"/><path d="M560.4,356.0L564.6,356.8L568.9,354.7L575.4,354.3L576.3,351.2"/><path d="M558.9,362.2L564.6,364.7L569.5,363.9L575.4,354.3"/><path d="M569.5,363.9L573.2,368.4L576.6,371.6L581.7,373.5L591.6,373.1L593.4,373.5"/><path d="M575.4,354.3L580.3,356.4L587.7,355.1L592.2,366.3L596.5,367.1"/><path d="M576.6,371.6L576.0,378.2L577.4,382.8L586.5,381.3L591.6,380.1"/><path d="M586.5,381.3L586.5,383.9"/><path d="M551.0,362.2L556.1,366.3L560.4,368.0L567.2,368.8L569.5,363.9"/><path d="M556.1,366.3L556.9,369.6L561.8,376.3"/><path d="M567.2,368.8L567.2,374.3L564.6,378.2"/><path d="M567.2,374.3L570.3,376.3L571.7,379.4L568.9,380.9L567.2,380.9"/><path d="M571.7,379.4L576.0,378.2"/><path d="M568.9,380.9L570.3,384.7L571.7,387.7L569.5,389.5"/><path d="M570.3,384.7L577.4,382.8"/><path d="M578.8,328.8L587.4,320.4L591.6,318.4L589.9,311.1L591.6,300.8"/><path d="M571.7,318.9L587.4,320.4"/><path d="M581.1,309.0L589.9,311.1"/><path d="M591.6,300.8L591.6,294.5L597.3,285.6L595.9,273.1L597.3,263.1L594.5,256.1L597.3,248.8L593.1,238.9L593.9,230.8L600.2,230.8"/><path d="M580.3,261.0L578.8,248.8L570.3,237.3L574.6,241.2L583.1,240.4L586.0,230.8L593.1,238.9"/><path d="M543.3,303.5L546.1,297.4L547.6,291.6L546.1,276.3L553.2,266.5L558.9,248.8L564.6,241.2L570.3,237.3"/><path d="M578.8,328.8L580.3,335.9L578.8,340.5L583.1,338.7L591.6,340.1L598.8,341.5L603.0,337.3L611.6,336.9L618.7,345.5L625.8,349.5L620.1,359.8"/><path d="M591.6,318.4L600.2,319.9L603.0,333.6L603.0,337.3"/><path d="M587.7,355.1L595.9,358.1L597.3,362.2"/><path d="M615.8,401.4L620.1,399.3L631.5,398.2"/><path d="M630.0,382.0L635.7,383.5L639.4,388.8L638.6,396.8L631.5,398.2"/><path d="M618.7,370.0L625.8,374.7L631.5,375.5L642.8,380.1L647.4,382.0"/><path d="M635.7,383.5L644.3,383.9L650.0,380.9"/><path d="M639.4,388.8L644.3,391.7L648.5,391.4L651.4,393.9"/><path d="M631.5,398.2L628.6,407.3L622.4,411.1L616.7,414.8L613.5,413.5L614.4,407.0L614.1,405.6"/><path d="M622.4,411.1L623.8,415.2L631.5,419.2L639.1,425.1L644.3,425.4L647.4,425.7L648.5,422.5"/><path d="M647.4,425.7L649.7,427.4"/><path d="M638.6,396.8L641.4,403.9L643.4,410.8L647.1,414.2L648.5,422.5"/><path d="M616.7,414.8L618.7,421.5L611.6,424.4"/><path d="M613.0,412.5L611.6,417.5L611.3,424.1"/><path d="M609.6,418.2L611.3,424.1"/><path d="M634.3,463.8L645.7,462.9L659.9,456.9L669.9,445.7L672.4,440.1"/><path d="M658.8,440.1L669.9,445.7"/><path d="M665.3,397.5L674.1,395.0L685.5,400.0L684.9,410.8L685.5,423.1L691.2,432.2L687.2,437.9"/><path d="M685.5,400.0L695.5,397.5L704.9,397.9L714.0,399.3L723.9,397.1"/><path d="M685.5,423.1L701.2,424.1L709.7,417.5L714.0,409.1L723.9,398.6"/><path d="M706.8,442.6L714.0,440.1L722.5,422.5L725.3,414.2L732.4,405.6"/><path d="M732.4,405.6L736.7,417.5L742.4,422.5L762.3,430.6L773.7,429.6L787.9,429.0"/><path d="M762.3,430.6L763.7,435.4L765.2,447.8"/><path d="M773.7,429.6L775.1,438.5L772.3,441.6L774.5,450.9"/><path d="M662.5,380.9L671.3,382.8L671.3,368.4L678.4,366.3L688.4,374.3L699.7,376.3L705.4,383.9L714.0,378.2L728.2,376.3L739.6,376.7L741.0,368.4L748.1,360.2L755.2,360.2L760.3,351.2"/><path d="M652.8,363.5L657.1,345.1L668.4,343.7L685.5,343.7L686.9,335.9L696.9,326.4L708.3,322.4L721.1,328.8L729.6,328.8L729.6,340.5L741.0,343.7L752.4,346.0L760.3,351.2"/><path d="M671.3,382.8L677.0,378.2L682.7,380.1L686.9,383.2L695.5,391.4L701.2,396.8"/><path d="M695.5,391.4L704.0,390.3L708.3,385.1L714.0,386.9L721.1,389.5L725.3,385.8L739.6,380.1"/><path d="M704.9,397.9L706.8,393.9L712.5,393.2L714.0,388.0"/><path d="M506.6,405.3L507.2,414.2L501.8,416.8L487.3,426.7L487.3,431.2"/><path d="M474.5,429.9L487.3,429.9"/><path d="M487.3,431.2L487.3,435.4L477.9,435.4L477.9,443.2L475.0,450.0L463.6,450.0"/><path d="M487.3,431.2L498.3,438.5L515.4,450.9L523.4,456.3L546.1,443.2"/><path d="M498.3,438.5L494.9,464.4L479.3,467.4L477.3,469.7L464.5,464.4"/><path d="M536.5,398.9L535.3,407.3L533.3,411.8L539.0,421.8L540.4,438.5L546.1,443.2L554.7,444.7L580.3,455.4L580.3,453.9L583.1,453.9L583.1,447.8"/><path d="M544.7,411.8L541.9,416.8L539.0,421.8"/><path d="M583.1,417.2L583.1,447.8L617.0,447.8"/><path d="M523.4,456.3L523.9,464.4L514.8,468.8L512.6,470.3L506.3,468.8L499.2,468.8L496.4,477.6L487.8,479.1L480.7,476.7L477.3,469.7"/><path d="M464.5,476.2L473.0,476.7L480.7,476.7"/><path d="M468.5,480.5L473.0,476.7"/><path d="M474.5,487.7L479.3,483.4L482.1,488.3L479.3,492.3"/><path d="M482.1,488.3L489.2,487.7L490.7,499.5"/><path d="M487.8,479.1L489.2,482.8L489.2,487.7"/><path d="M496.4,477.6L503.5,480.5L504.0,484.9L506.3,498.3"/><path d="M503.5,480.5L512.0,480.5L517.7,476.2L512.6,470.3"/><path d="M512.0,480.5L513.4,494.9"/><path d="M517.1,479.1L516.3,494.3"/><path d="M517.7,476.2L522.0,479.1L519.7,486.3L519.7,494.0"/><path d="M523.9,464.4L524.8,473.2L534.8,475.0L550.4,473.2L553.2,476.2L551.8,483.4L549.0,489.2L544.7,493.5L536.7,498.9"/><path d="M550.4,473.2L556.1,452.4L554.7,444.7"/><path d="M553.2,476.2L556.1,484.9L564.6,486.3L574.6,481.1L576.0,480.5"/><path d="M580.3,455.4L576.0,471.8L574.6,476.2L576.0,480.5L578.8,486.3L583.1,484.9L588.8,484.9L597.3,484.0L608.7,484.9L609.3,482.0L615.8,470.9"/><path d="M617.0,447.8L621.5,459.9L615.8,470.9L621.5,470.3L632.9,476.2"/><path d="M551.8,483.4L557.5,490.6L566.0,486.3L574.6,499.2L590.2,497.8L598.8,502.0L607.3,501.2L613.0,497.8L628.6,500.6L628.6,516.6"/><path d="M609.3,482.0L605.9,489.7L613.0,497.8"/><path d="M632.9,476.2L635.2,479.1L635.2,485.1L647.1,489.2L640.0,497.8L631.5,500.6"/><path d="M549.0,489.2L554.7,497.8L557.5,506.3L564.6,502.0L563.2,523.4L557.5,529.1L547.0,529.1"/><path d="M557.5,506.3L553.2,505.7L544.1,505.7L539.9,505.5"/><path d="M553.2,505.7L549.5,519.1L543.3,522.0"/><path d="M544.1,505.7L544.1,509.2L538.5,509.2"/><path d="M598.8,502.0L595.9,514.8L594.5,524.8L598.8,534.8L593.1,536.3L593.1,543.5L580.3,543.5L574.6,540.6L573.2,532.0L561.8,534.8L557.5,529.1"/><path d="M595.9,514.8L608.4,514.8L608.7,510.6L611.6,499.2"/><path d="M608.4,514.8L618.7,522.0L623.8,525.1"/><path d="M598.8,534.8L605.9,539.1L610.1,544.9L626.9,542.0"/></g></g></defs></svg>
<svg style="left:197px;top:593px" width="627" height="354" viewBox="0 0 627 354"><defs><clipPath id="c197"><rect width="627" height="354"/></clipPath></defs><g clip-path="url(#c197)"><rect width="627" height="354" fill="#D1D8E0"/><rect width="627" height="354" fill="url(#waves)"/><g transform="translate(-64,-184)"><use href="#world"/></g><circle cx="225.8" cy="21.3" r="1.2" fill="#D3A42E" stroke="none" stroke-width="0"/><circle cx="122.9" cy="99.9" r="1.2" fill="#D3A42E" stroke="none" stroke-width="0"/><circle cx="64.0" cy="109.7" r="1.2" fill="#D3A42E" stroke="none" stroke-width="0"/><circle cx="65.0" cy="121.9" r="1.2" fill="#D3A42E" stroke="none" stroke-width="0"/><circle cx="84.9" cy="139.1" r="1.2" fill="#D3A42E" stroke="none" stroke-width="0"/><circle cx="123.9" cy="152.7" r="1.65" fill="#D2A12B" stroke="#B98E22" stroke-width="0.5"/><circle cx="138.1" cy="152.7" r="1.2" fill="#D3A42E" stroke="none" stroke-width="0"/><circle cx="192.9" cy="149.9" r="1.2" fill="#D3A42E" stroke="none" stroke-width="0"/><circle cx="180.7" cy="160.0" r="1.2" fill="#D3A42E" stroke="none" stroke-width="0"/><circle cx="102.0" cy="175.9" r="2.35" fill="#F4D98C" stroke="#C89A2B" stroke-width="1.15"/><circle cx="94.8" cy="176.7" r="1.2" fill="#D3A42E" stroke="none" stroke-width="0"/><circle cx="139.1" cy="174.1" r="1.2" fill="#D3A42E" stroke="none" stroke-width="0"/><circle cx="177.9" cy="177.0" r="1.65" fill="#D2A12B" stroke="#B98E22" stroke-width="0.5"/><circle cx="207.8" cy="178.8" r="1.2" fill="#D3A42E" stroke="none" stroke-width="0"/><circle cx="238.8" cy="181.8" r="1.65" fill="#D2A12B" stroke="#B98E22" stroke-width="0.5"/><circle cx="267.1" cy="181.8" r="1.2" fill="#D3A42E" stroke="none" stroke-width="0"/><circle cx="266.0" cy="186.9" r="1.2" fill="#D3A42E" stroke="none" stroke-width="0"/><circle cx="296.9" cy="172.7" r="1.2" fill="#D3A42E" stroke="none" stroke-width="0"/><circle cx="258.0" cy="150.7" r="1.2" fill="#D3A42E" stroke="none" stroke-width="0"/><circle cx="182.0" cy="193.0" r="1.65" fill="#D2A12B" stroke="#B98E22" stroke-width="0.5"/><circle cx="105.8" cy="196.0" r="1.65" fill="#D2A12B" stroke="#B98E22" stroke-width="0.5"/><circle cx="94.8" cy="197.0" r="1.2" fill="#D3A42E" stroke="none" stroke-width="0"/><circle cx="140.7" cy="201.9" r="2.0" fill="#D3A530" stroke="#B98E22" stroke-width="0.7"/><circle cx="213.6" cy="194.8" r="3.4" fill="#FFE296" stroke="#C99A2A" stroke-width="1.1"/><circle cx="239.0" cy="198.9" r="3.4" fill="#FFE296" stroke="#C99A2A" stroke-width="1.1"/><circle cx="227.9" cy="210.1" r="2.35" fill="#F4D98C" stroke="#C89A2B" stroke-width="1.15"/><circle cx="106.8" cy="218.8" r="3.4" fill="#FFE296" stroke="#C99A2A" stroke-width="1.1"/><circle cx="141.8" cy="219.2" r="1.2" fill="#D3A42E" stroke="none" stroke-width="0"/><circle cx="209.8" cy="219.0" r="2.35" fill="#F4D98C" stroke="#C89A2B" stroke-width="1.15"/><circle cx="114.7" cy="228.7" r="1.65" fill="#D2A12B" stroke="#B98E22" stroke-width="0.5"/><circle cx="134.6" cy="230.0" r="1.65" fill="#D2A12B" stroke="#B98E22" stroke-width="0.5"/><circle cx="174.9" cy="236.0" r="2.35" fill="#F4D98C" stroke="#C89A2B" stroke-width="1.15"/><circle cx="210.0" cy="236.0" r="2.35" fill="#F4D98C" stroke="#C89A2B" stroke-width="1.15"/><circle cx="216.9" cy="249.9" r="2.0" fill="#D3A530" stroke="#B98E22" stroke-width="0.7"/><circle cx="263.8" cy="232.0" r="1.2" fill="#D3A42E" stroke="none" stroke-width="0"/><circle cx="231.7" cy="258.0" r="1.2" fill="#D3A42E" stroke="none" stroke-width="0"/><circle cx="143.8" cy="254.7" r="1.2" fill="#D3A42E" stroke="none" stroke-width="0"/><circle cx="164.9" cy="252.9" r="1.65" fill="#D2A12B" stroke="#B98E22" stroke-width="0.5"/><circle cx="3.0" cy="268.5" r="1.2" fill="#D3A42E" stroke="none" stroke-width="0"/><circle cx="155.0" cy="269.0" r="1.65" fill="#D2A12B" stroke="#B98E22" stroke-width="0.5"/><circle cx="167.0" cy="272.8" r="2.35" fill="#F4D98C" stroke="#C89A2B" stroke-width="1.15"/><circle cx="202.7" cy="269.0" r="1.65" fill="#D2A12B" stroke="#B98E22" stroke-width="0.5"/><circle cx="186.4" cy="284.4" r="1.65" fill="#D2A12B" stroke="#B98E22" stroke-width="0.5"/><circle cx="200.0" cy="289.5" r="1.2" fill="#D3A42E" stroke="none" stroke-width="0"/><circle cx="244.7" cy="275.0" r="1.65" fill="#D2A12B" stroke="#B98E22" stroke-width="0.5"/><circle cx="260.0" cy="276.1" r="1.2" fill="#D3A42E" stroke="none" stroke-width="0"/><circle cx="274.8" cy="288.9" r="1.2" fill="#D3A42E" stroke="none" stroke-width="0"/><circle cx="251.0" cy="294.0" r="1.2" fill="#D3A42E" stroke="none" stroke-width="0"/><circle cx="212.0" cy="301.0" r="1.65" fill="#D2A12B" stroke="#B98E22" stroke-width="0.5"/><circle cx="262.0" cy="303.1" r="1.65" fill="#D2A12B" stroke="#B98E22" stroke-width="0.5"/><circle cx="236.8" cy="308.0" r="1.65" fill="#D2A12B" stroke="#B98E22" stroke-width="0.5"/><circle cx="236.8" cy="315.9" r="2.0" fill="#D3A530" stroke="#B98E22" stroke-width="0.7"/><circle cx="290.8" cy="312.0" r="1.2" fill="#D3A42E" stroke="none" stroke-width="0"/><circle cx="298.5" cy="314.8" r="1.2" fill="#D3A42E" stroke="none" stroke-width="0"/><circle cx="222.0" cy="335.6" r="1.2" fill="#D3A42E" stroke="none" stroke-width="0"/><circle cx="227.0" cy="333.5" r="1.2" fill="#D3A42E" stroke="none" stroke-width="0"/><circle cx="275.4" cy="336.8" r="1.2" fill="#D3A42E" stroke="none" stroke-width="0"/><circle cx="229.7" cy="348.8" r="1.2" fill="#D3A42E" stroke="none" stroke-width="0"/><circle cx="443.8" cy="154.8" r="3.4" fill="#FFE296" stroke="#C99A2A" stroke-width="1.1"/><circle cx="468.1" cy="156.9" r="4.0" fill="#FFE296" stroke="#C99A2A" stroke-width="1.1"/><circle cx="462.8" cy="171.8" r="3.4" fill="#FFE296" stroke="#C99A2A" stroke-width="1.1"/><circle cx="493.7" cy="148.7" r="2.35" fill="#F4D98C" stroke="#C89A2B" stroke-width="1.15"/><circle cx="492.7" cy="171.8" r="2.35" fill="#F4D98C" stroke="#C89A2B" stroke-width="1.15"/><circle cx="441.8" cy="171.8" r="1.65" fill="#D2A12B" stroke="#B98E22" stroke-width="0.5"/><circle cx="477.0" cy="116.7" r="2.0" fill="#D3A530" stroke="#B98E22" stroke-width="0.7"/><circle cx="496.8" cy="118.8" r="2.35" fill="#F4D98C" stroke="#C89A2B" stroke-width="1.15"/><circle cx="520.6" cy="115.7" r="2.0" fill="#D3A530" stroke="#B98E22" stroke-width="0.7"/><circle cx="554.9" cy="139.0" r="2.35" fill="#F4D98C" stroke="#C89A2B" stroke-width="1.15"/><circle cx="527.8" cy="170.7" r="1.65" fill="#D2A12B" stroke="#B98E22" stroke-width="0.5"/><circle cx="556.9" cy="171.8" r="1.65" fill="#D2A12B" stroke="#B98E22" stroke-width="0.5"/><circle cx="519.6" cy="145.7" r="1.2" fill="#D3A42E" stroke="none" stroke-width="0"/><circle cx="559.0" cy="129.8" r="1.2" fill="#D3A42E" stroke="none" stroke-width="0"/><circle cx="595.0" cy="126.7" r="1.2" fill="#D3A42E" stroke="none" stroke-width="0"/><circle cx="618.8" cy="127.8" r="1.2" fill="#D3A42E" stroke="none" stroke-width="0"/><circle cx="590.9" cy="145.7" r="1.2" fill="#D3A42E" stroke="none" stroke-width="0"/><circle cx="620.9" cy="145.1" r="1.2" fill="#D3A42E" stroke="none" stroke-width="0"/><circle cx="618.8" cy="78.9" r="1.2" fill="#D3A42E" stroke="none" stroke-width="0"/><circle cx="563.0" cy="87.0" r="1.2" fill="#D3A42E" stroke="none" stroke-width="0"/><circle cx="499.9" cy="90.1" r="1.2" fill="#D3A42E" stroke="none" stroke-width="0"/><circle cx="520.0" cy="90.7" r="1.2" fill="#D3A42E" stroke="none" stroke-width="0"/><circle cx="490.1" cy="58.1" r="1.2" fill="#D3A42E" stroke="none" stroke-width="0"/><circle cx="535.9" cy="54.0" r="1.2" fill="#D3A42E" stroke="none" stroke-width="0"/><circle cx="475.8" cy="95.0" r="1.2" fill="#D3A42E" stroke="none" stroke-width="0"/><circle cx="439.7" cy="130.8" r="1.2" fill="#D3A42E" stroke="none" stroke-width="0"/><circle cx="389.8" cy="87.0" r="1.2" fill="#D3A42E" stroke="none" stroke-width="0"/><circle cx="596.0" cy="176.9" r="1.2" fill="#D3A42E" stroke="none" stroke-width="0"/><circle cx="438.0" cy="200.0" r="2.35" fill="#F4D98C" stroke="#C89A2B" stroke-width="1.15"/><circle cx="431.8" cy="213.0" r="1.65" fill="#D2A12B" stroke="#B98E22" stroke-width="0.5"/><circle cx="372.9" cy="211.1" r="1.2" fill="#D3A42E" stroke="none" stroke-width="0"/><circle cx="486.9" cy="193.7" r="2.35" fill="#F4D98C" stroke="#C89A2B" stroke-width="1.15"/><circle cx="491.7" cy="212.0" r="1.2" fill="#D3A42E" stroke="none" stroke-width="0"/><circle cx="468.7" cy="220.6" r="1.65" fill="#D2A12B" stroke="#B98E22" stroke-width="0.5"/><circle cx="464.8" cy="228.9" r="1.2" fill="#D3A42E" stroke="none" stroke-width="0"/><circle cx="485.0" cy="230.0" r="1.2" fill="#D3A42E" stroke="none" stroke-width="0"/><circle cx="526.0" cy="198.0" r="1.65" fill="#D2A12B" stroke="#B98E22" stroke-width="0.5"/><circle cx="564.7" cy="195.9" r="1.2" fill="#D3A42E" stroke="none" stroke-width="0"/><circle cx="594.0" cy="219.8" r="1.65" fill="#D2A12B" stroke="#B98E22" stroke-width="0.5"/><circle cx="583.1" cy="202.8" r="1.2" fill="#D3A42E" stroke="none" stroke-width="0"/><circle cx="523.4" cy="213.3" r="1.2" fill="#D3A42E" stroke="none" stroke-width="0"/><circle cx="553.8" cy="219.1" r="1.2" fill="#D3A42E" stroke="none" stroke-width="0"/><circle cx="536.9" cy="238.7" r="2.35" fill="#F4D98C" stroke="#C89A2B" stroke-width="1.15"/><circle cx="548.4" cy="232.1" r="1.65" fill="#D2A12B" stroke="#B98E22" stroke-width="0.5"/><circle cx="430.7" cy="231.7" r="1.65" fill="#D2A12B" stroke="#B98E22" stroke-width="0.5"/><circle cx="401.8" cy="245.8" r="1.2" fill="#D3A42E" stroke="none" stroke-width="0"/><circle cx="495.8" cy="255.6" r="1.2" fill="#D3A42E" stroke="none" stroke-width="0"/><circle cx="407.7" cy="273.8" r="1.2" fill="#D3A42E" stroke="none" stroke-width="0"/><circle cx="437.0" cy="279.9" r="1.2" fill="#D3A42E" stroke="none" stroke-width="0"/><circle cx="434.0" cy="291.9" r="1.2" fill="#D3A42E" stroke="none" stroke-width="0"/><circle cx="405.0" cy="289.3" r="1.2" fill="#D3A42E" stroke="none" stroke-width="0"/><circle cx="437.0" cy="306.0" r="1.65" fill="#D2A12B" stroke="#B98E22" stroke-width="0.5"/><circle cx="465.9" cy="302.1" r="1.65" fill="#D2A12B" stroke="#B98E22" stroke-width="0.5"/><circle cx="439.8" cy="314.0" r="1.2" fill="#D3A42E" stroke="none" stroke-width="0"/><circle cx="482.2" cy="311.4" r="1.2" fill="#D3A42E" stroke="none" stroke-width="0"/><circle cx="478.5" cy="320.1" r="1.2" fill="#D3A42E" stroke="none" stroke-width="0"/><circle cx="485.0" cy="332.0" r="1.2" fill="#D3A42E" stroke="none" stroke-width="0"/><circle cx="555.5" cy="325.5" r="1.65" fill="#D2A12B" stroke="#B98E22" stroke-width="0.5"/><circle cx="536.4" cy="324.9" r="1.2" fill="#D3A42E" stroke="none" stroke-width="0"/><circle cx="533.0" cy="335.3" r="1.2" fill="#D3A42E" stroke="none" stroke-width="0"/><circle cx="310.6" cy="337.5" r="1.2" fill="#D3A42E" stroke="none" stroke-width="0"/><circle cx="335.6" cy="338.6" r="1.2" fill="#D3A42E" stroke="none" stroke-width="0"/><circle cx="308.4" cy="347.2" r="1.2" fill="#D3A42E" stroke="none" stroke-width="0"/><circle cx="346.4" cy="351.1" r="1.2" fill="#D3A42E" stroke="none" stroke-width="0"/><circle cx="586.4" cy="240.8" r="1.2" fill="#D3A42E" stroke="none" stroke-width="0"/><circle cx="609.2" cy="268.0" r="1.2" fill="#D3A42E" stroke="none" stroke-width="0"/><circle cx="585.3" cy="285.3" r="1.2" fill="#D3A42E" stroke="none" stroke-width="0"/><circle cx="533.2" cy="286.0" r="1.2" fill="#D3A42E" stroke="none" stroke-width="0"/><circle cx="560.3" cy="257.1" r="1.2" fill="#D3A42E" stroke="none" stroke-width="0"/><circle cx="561.4" cy="266.9" r="1.2" fill="#D3A42E" stroke="none" stroke-width="0"/><circle cx="556.0" cy="306.0" r="1.2" fill="#D3A42E" stroke="none" stroke-width="0"/><circle cx="617.9" cy="218.0" r="1.2" fill="#D3A42E" stroke="none" stroke-width="0"/><circle cx="455.0" cy="198.9" r="4.9" fill="#F7A35C" stroke="#C2702F" stroke-width="1"/><circle cx="169.8" cy="212.7" r="9.3" fill="#A13E5E" stroke="#2B0A16" stroke-width="1.1"/></g></svg>
<svg style="left:850px;top:593px" width="627" height="354" viewBox="0 0 627 354"><defs><clipPath id="c850"><rect width="627" height="354"/></clipPath></defs><g clip-path="url(#c850)"><rect width="627" height="354" fill="#D1D8E0"/><rect width="627" height="354" fill="url(#waves)"/><g transform="translate(-118.4,-174.4)"><use href="#world"/></g><circle cx="13.1" cy="67.5" r="1.2" fill="#D3A42E" stroke="none" stroke-width="0"/><circle cx="67.9" cy="108.9" r="1.2" fill="#D3A42E" stroke="none" stroke-width="0"/><circle cx="114.9" cy="152.1" r="1.2" fill="#D3A42E" stroke="none" stroke-width="0"/><circle cx="67.9" cy="160.6" r="1.65" fill="#D2A12B" stroke="#B98E22" stroke-width="0.5"/><circle cx="86.8" cy="159.8" r="1.2" fill="#D3A42E" stroke="none" stroke-width="0"/><circle cx="202.0" cy="160.6" r="1.2" fill="#D3A42E" stroke="none" stroke-width="0"/><circle cx="47.0" cy="184.9" r="2.35" fill="#F4D98C" stroke="#C89A2B" stroke-width="1.15"/><circle cx="38.9" cy="179.9" r="1.2" fill="#D3A42E" stroke="none" stroke-width="0"/><circle cx="84.8" cy="182.0" r="1.2" fill="#D3A42E" stroke="none" stroke-width="0"/><circle cx="122.0" cy="185.9" r="1.65" fill="#D2A12B" stroke="#B98E22" stroke-width="0.5"/><circle cx="146.1" cy="187.8" r="1.2" fill="#D3A42E" stroke="none" stroke-width="0"/><circle cx="183.9" cy="190.9" r="1.65" fill="#D2A12B" stroke="#B98E22" stroke-width="0.5"/><circle cx="209.8" cy="189.9" r="1.2" fill="#D3A42E" stroke="none" stroke-width="0"/><circle cx="210.9" cy="196.1" r="1.2" fill="#D3A42E" stroke="none" stroke-width="0"/><circle cx="126.7" cy="201.9" r="1.65" fill="#D2A12B" stroke="#B98E22" stroke-width="0.5"/><circle cx="48.8" cy="203.0" r="1.65" fill="#D2A12B" stroke="#B98E22" stroke-width="0.5"/><circle cx="39.5" cy="210.6" r="1.2" fill="#D3A42E" stroke="none" stroke-width="0"/><circle cx="86.8" cy="211.9" r="2.0" fill="#D3A530" stroke="#B98E22" stroke-width="0.7"/><circle cx="158.9" cy="204.0" r="3.4" fill="#FFE296" stroke="#C99A2A" stroke-width="1.1"/><circle cx="183.9" cy="207.9" r="3.4" fill="#FFE296" stroke="#C99A2A" stroke-width="1.1"/><circle cx="172.9" cy="220.0" r="2.35" fill="#F4D98C" stroke="#C89A2B" stroke-width="1.15"/><circle cx="52.0" cy="227.9" r="3.4" fill="#FFE296" stroke="#C99A2A" stroke-width="1.1"/><circle cx="89.8" cy="226.0" r="1.2" fill="#D3A42E" stroke="none" stroke-width="0"/><circle cx="154.8" cy="227.9" r="2.35" fill="#F4D98C" stroke="#C89A2B" stroke-width="1.15"/><circle cx="59.8" cy="238.1" r="1.65" fill="#D2A12B" stroke="#B98E22" stroke-width="0.5"/><circle cx="80.0" cy="238.9" r="1.65" fill="#D2A12B" stroke="#B98E22" stroke-width="0.5"/><circle cx="119.9" cy="244.9" r="2.35" fill="#F4D98C" stroke="#C89A2B" stroke-width="1.15"/><circle cx="154.8" cy="244.9" r="2.35" fill="#F4D98C" stroke="#C89A2B" stroke-width="1.15"/><circle cx="208.8" cy="240.8" r="1.2" fill="#D3A42E" stroke="none" stroke-width="0"/><circle cx="162.1" cy="258.8" r="2.0" fill="#D3A530" stroke="#B98E22" stroke-width="0.7"/><circle cx="172.9" cy="263.8" r="1.2" fill="#D3A42E" stroke="none" stroke-width="0"/><circle cx="111.2" cy="260.9" r="1.65" fill="#D2A12B" stroke="#B98E22" stroke-width="0.5"/><circle cx="91.8" cy="265.9" r="1.2" fill="#D3A42E" stroke="none" stroke-width="0"/><circle cx="99.7" cy="278.2" r="1.65" fill="#D2A12B" stroke="#B98E22" stroke-width="0.5"/><circle cx="110.7" cy="280.9" r="2.35" fill="#F4D98C" stroke="#C89A2B" stroke-width="1.15"/><circle cx="146.1" cy="278.2" r="1.2" fill="#D3A42E" stroke="none" stroke-width="0"/><circle cx="134.0" cy="293.7" r="1.2" fill="#D3A42E" stroke="none" stroke-width="0"/><circle cx="143.8" cy="296.9" r="1.2" fill="#D3A42E" stroke="none" stroke-width="0"/><circle cx="192.8" cy="283.8" r="1.2" fill="#D3A42E" stroke="none" stroke-width="0"/><circle cx="206.1" cy="285.0" r="1.2" fill="#D3A42E" stroke="none" stroke-width="0"/><circle cx="218.8" cy="293.7" r="1.2" fill="#D3A42E" stroke="none" stroke-width="0"/><circle cx="195.7" cy="303.1" r="1.2" fill="#D3A42E" stroke="none" stroke-width="0"/><circle cx="159.6" cy="310.8" r="1.65" fill="#D2A12B" stroke="#B98E22" stroke-width="0.5"/><circle cx="183.9" cy="314.1" r="1.65" fill="#D2A12B" stroke="#B98E22" stroke-width="0.5"/><circle cx="206.1" cy="311.8" r="1.65" fill="#D2A12B" stroke="#B98E22" stroke-width="0.5"/><circle cx="181.8" cy="324.9" r="2.0" fill="#D3A530" stroke="#B98E22" stroke-width="0.7"/><circle cx="242.7" cy="324.9" r="1.2" fill="#D3A42E" stroke="none" stroke-width="0"/><circle cx="166.8" cy="344.0" r="1.2" fill="#D3A42E" stroke="none" stroke-width="0"/><circle cx="172.0" cy="341.9" r="1.2" fill="#D3A42E" stroke="none" stroke-width="0"/><circle cx="255.1" cy="342.6" r="1.2" fill="#D3A42E" stroke="none" stroke-width="0"/><circle cx="221.3" cy="346.7" r="1.2" fill="#D3A42E" stroke="none" stroke-width="0"/><circle cx="277.0" cy="347.8" r="1.2" fill="#D3A42E" stroke="none" stroke-width="0"/><circle cx="388.6" cy="163.6" r="3.4" fill="#FFE296" stroke="#C99A2A" stroke-width="1.1"/><circle cx="412.8" cy="165.7" r="4.0" fill="#FFE296" stroke="#C99A2A" stroke-width="1.1"/><circle cx="407.7" cy="181.0" r="3.4" fill="#FFE296" stroke="#C99A2A" stroke-width="1.1"/><circle cx="388.0" cy="182.7" r="1.2" fill="#D3A42E" stroke="none" stroke-width="0"/><circle cx="439.0" cy="157.6" r="2.35" fill="#F4D98C" stroke="#C89A2B" stroke-width="1.15"/><circle cx="439.0" cy="181.6" r="2.35" fill="#F4D98C" stroke="#C89A2B" stroke-width="1.15"/><circle cx="422.0" cy="125.8" r="2.0" fill="#D3A530" stroke="#B98E22" stroke-width="0.7"/><circle cx="441.7" cy="127.9" r="2.35" fill="#F4D98C" stroke="#C89A2B" stroke-width="1.15"/><circle cx="465.7" cy="123.6" r="2.0" fill="#D3A530" stroke="#B98E22" stroke-width="0.7"/><circle cx="499.7" cy="146.6" r="2.0" fill="#D3A530" stroke="#B98E22" stroke-width="0.7"/><circle cx="473.8" cy="179.9" r="1.65" fill="#D2A12B" stroke="#B98E22" stroke-width="0.5"/><circle cx="501.2" cy="182.7" r="1.2" fill="#D3A42E" stroke="none" stroke-width="0"/><circle cx="467.2" cy="153.6" r="1.2" fill="#D3A42E" stroke="none" stroke-width="0"/><circle cx="504.0" cy="136.8" r="1.2" fill="#D3A42E" stroke="none" stroke-width="0"/><circle cx="565.0" cy="138.7" r="1.2" fill="#D3A42E" stroke="none" stroke-width="0"/><circle cx="543.7" cy="139.8" r="1.2" fill="#D3A42E" stroke="none" stroke-width="0"/><circle cx="537.7" cy="154.7" r="1.2" fill="#D3A42E" stroke="none" stroke-width="0"/><circle cx="567.0" cy="149.8" r="1.2" fill="#D3A42E" stroke="none" stroke-width="0"/><circle cx="597.9" cy="161.9" r="1.2" fill="#D3A42E" stroke="none" stroke-width="0"/><circle cx="603.8" cy="100.9" r="1.2" fill="#D3A42E" stroke="none" stroke-width="0"/><circle cx="604.9" cy="116.8" r="1.2" fill="#D3A42E" stroke="none" stroke-width="0"/><circle cx="508.0" cy="96.0" r="1.2" fill="#D3A42E" stroke="none" stroke-width="0"/><circle cx="444.9" cy="97.1" r="1.2" fill="#D3A42E" stroke="none" stroke-width="0"/><circle cx="464.7" cy="97.7" r="1.2" fill="#D3A42E" stroke="none" stroke-width="0"/><circle cx="417.7" cy="104.7" r="1.2" fill="#D3A42E" stroke="none" stroke-width="0"/><circle cx="444.9" cy="62.9" r="1.2" fill="#D3A42E" stroke="none" stroke-width="0"/><circle cx="487.8" cy="61.8" r="1.2" fill="#D3A42E" stroke="none" stroke-width="0"/><circle cx="338.0" cy="93.7" r="1.2" fill="#D3A42E" stroke="none" stroke-width="0"/><circle cx="386.1" cy="139.2" r="1.2" fill="#D3A42E" stroke="none" stroke-width="0"/><circle cx="529.9" cy="181.0" r="1.2" fill="#D3A42E" stroke="none" stroke-width="0"/><circle cx="585.8" cy="181.9" r="1.2" fill="#D3A42E" stroke="none" stroke-width="0"/><circle cx="381.8" cy="208.9" r="2.35" fill="#F4D98C" stroke="#C89A2B" stroke-width="1.15"/><circle cx="407.9" cy="201.6" r="1.65" fill="#D2A12B" stroke="#B98E22" stroke-width="0.5"/><circle cx="430.9" cy="202.7" r="2.35" fill="#F4D98C" stroke="#C89A2B" stroke-width="1.15"/><circle cx="471.9" cy="206.7" r="1.65" fill="#D2A12B" stroke="#B98E22" stroke-width="0.5"/><circle cx="376.9" cy="222.9" r="1.65" fill="#D2A12B" stroke="#B98E22" stroke-width="0.5"/><circle cx="412.6" cy="229.9" r="1.65" fill="#D2A12B" stroke="#B98E22" stroke-width="0.5"/><circle cx="437.0" cy="221.8" r="1.2" fill="#D3A42E" stroke="none" stroke-width="0"/><circle cx="470.0" cy="222.9" r="1.2" fill="#D3A42E" stroke="none" stroke-width="0"/><circle cx="498.0" cy="229.9" r="1.2" fill="#D3A42E" stroke="none" stroke-width="0"/><circle cx="493.1" cy="241.8" r="1.65" fill="#D2A12B" stroke="#B98E22" stroke-width="0.5"/><circle cx="481.7" cy="247.7" r="2.0" fill="#D3A530" stroke="#B98E22" stroke-width="0.7"/><circle cx="375.9" cy="240.9" r="1.65" fill="#D2A12B" stroke="#B98E22" stroke-width="0.5"/><circle cx="347.2" cy="249.9" r="1.2" fill="#D3A42E" stroke="none" stroke-width="0"/><circle cx="347.8" cy="254.5" r="1.2" fill="#D3A42E" stroke="none" stroke-width="0"/><circle cx="416.9" cy="239.9" r="1.2" fill="#D3A42E" stroke="none" stroke-width="0"/><circle cx="440.7" cy="265.2" r="1.2" fill="#D3A42E" stroke="none" stroke-width="0"/><circle cx="484.2" cy="263.0" r="1.2" fill="#D3A42E" stroke="none" stroke-width="0"/><circle cx="347.8" cy="286.0" r="1.2" fill="#D3A42E" stroke="none" stroke-width="0"/><circle cx="325.9" cy="294.9" r="1.2" fill="#D3A42E" stroke="none" stroke-width="0"/><circle cx="350.0" cy="297.0" r="1.2" fill="#D3A42E" stroke="none" stroke-width="0"/><circle cx="386.9" cy="301.3" r="1.2" fill="#D3A42E" stroke="none" stroke-width="0"/><circle cx="477.8" cy="294.9" r="1.65" fill="#D2A12B" stroke="#B98E22" stroke-width="0.5"/><circle cx="408.8" cy="313.0" r="1.65" fill="#D2A12B" stroke="#B98E22" stroke-width="0.5"/><circle cx="383.3" cy="314.7" r="1.2" fill="#D3A42E" stroke="none" stroke-width="0"/><circle cx="355.0" cy="313.6" r="1.2" fill="#D3A42E" stroke="none" stroke-width="0"/><circle cx="385.4" cy="323.1" r="1.2" fill="#D3A42E" stroke="none" stroke-width="0"/><circle cx="426.8" cy="320.8" r="1.2" fill="#D3A42E" stroke="none" stroke-width="0"/><circle cx="423.2" cy="328.9" r="1.2" fill="#D3A42E" stroke="none" stroke-width="0"/><circle cx="479.5" cy="335.9" r="1.2" fill="#D3A42E" stroke="none" stroke-width="0"/><circle cx="500.8" cy="335.3" r="1.65" fill="#D2A12B" stroke="#B98E22" stroke-width="0.5"/><circle cx="511.8" cy="204.8" r="1.65" fill="#D2A12B" stroke="#B98E22" stroke-width="0.5"/><circle cx="586.2" cy="181.9" r="1.2" fill="#D3A42E" stroke="none" stroke-width="0"/><circle cx="529.9" cy="180.8" r="1.2" fill="#D3A42E" stroke="none" stroke-width="0"/><circle cx="525.6" cy="212.7" r="1.2" fill="#D3A42E" stroke="none" stroke-width="0"/><circle cx="563.9" cy="213.3" r="1.2" fill="#D3A42E" stroke="none" stroke-width="0"/><circle cx="604.9" cy="204.2" r="1.2" fill="#D3A42E" stroke="none" stroke-width="0"/><circle cx="592.6" cy="222.7" r="1.2" fill="#D3A42E" stroke="none" stroke-width="0"/><circle cx="605.9" cy="247.7" r="1.65" fill="#D2A12B" stroke="#B98E22" stroke-width="0.5"/><circle cx="609.6" cy="280.7" r="2.35" fill="#F4D98C" stroke="#C89A2B" stroke-width="1.15"/><circle cx="612.7" cy="300.8" r="1.2" fill="#D3A42E" stroke="none" stroke-width="0"/><circle cx="621.2" cy="298.7" r="1.2" fill="#D3A42E" stroke="none" stroke-width="0"/><circle cx="611.7" cy="308.3" r="1.2" fill="#D3A42E" stroke="none" stroke-width="0"/><circle cx="622.3" cy="317.8" r="1.2" fill="#D3A42E" stroke="none" stroke-width="0"/><circle cx="602.1" cy="326.3" r="1.2" fill="#D3A42E" stroke="none" stroke-width="0"/><circle cx="532.0" cy="263.7" r="1.2" fill="#D3A42E" stroke="none" stroke-width="0"/><circle cx="575.6" cy="265.2" r="1.2" fill="#D3A42E" stroke="none" stroke-width="0"/><circle cx="535.2" cy="249.2" r="1.2" fill="#D3A42E" stroke="none" stroke-width="0"/><circle cx="114.9" cy="221.6" r="9.3" fill="#A13E5E" stroke="#2B0A16" stroke-width="1.1"/></g></svg>
<div style="position:absolute;left:207px;top:603px;width:26px;height:52px;background:#fff;border-radius:4px;box-shadow:0 2px 3px rgba(0,0,0,0.25);"></div>
<div style="position:absolute;left:207px;top:628.5px;width:26px;height:1px;background:#D3DAE6"></div>
<svg style="left:207px;top:603px" width="26" height="52" viewBox="0 0 26 52" stroke="#000" stroke-width="1.6" fill="none"><path d="M13.3 9.6V19M8.6 14.3H18"/><path d="M9.6 39.5H17" stroke-width="2.1"/></svg>
<div style="position:absolute;left:207px;top:665px;width:26px;height:26px;background:#fff;border-radius:4px;box-shadow:0 2px 3px rgba(0,0,0,0.25);"></div>
<svg style="left:207px;top:665px" width="26" height="26" viewBox="0 0 26 26" stroke="#111" stroke-width="1.5" fill="none"><path d="M9.5 7V16.5H19M7 9.5H16.5V19"/><path d="M17 7.5L14 10.5" stroke-width="1"/></svg>
<div style="position:absolute;left:207px;top:700px;width:26px;height:52px;background:#fff;border-radius:4px;box-shadow:0 2px 3px rgba(0,0,0,0.25);"></div>
<div style="position:absolute;left:207px;top:725.5px;width:26px;height:1px;background:#D3DAE6"></div>
<svg style="left:207px;top:700px" width="26" height="52" viewBox="0 0 26 52" fill="#333"><path d="M13 7.5L19 11.8 17 18.5H9L7 11.8Z"/><rect x="8" y="34" width="10" height="10"/></svg>
<div style="position:absolute;left:860px;top:603px;width:26px;height:52px;background:#fff;border-radius:4px;box-shadow:0 2px 3px rgba(0,0,0,0.25);"></div>
<div style="position:absolute;left:860px;top:628.5px;width:26px;height:1px;background:#D3DAE6"></div>
<svg style="left:860px;top:603px" width="26" height="52" viewBox="0 0 26 52" stroke="#000" stroke-width="1.6" fill="none"><path d="M13.3 9.6V19M8.6 14.3H18"/><path d="M9.6 39.5H17" stroke-width="2.1"/></svg>
<div style="position:absolute;left:860px;top:665px;width:26px;height:26px;background:#fff;border-radius:4px;box-shadow:0 2px 3px rgba(0,0,0,0.25);"></div>
<svg style="left:860px;top:665px" width="26" height="26" viewBox="0 0 26 26" stroke="#111" stroke-width="1.5" fill="none"><path d="M9.5 7V16.5H19M7 9.5H16.5V19"/><path d="M17 7.5L14 10.5" stroke-width="1"/></svg>
<div style="position:absolute;left:860px;top:700px;width:26px;height:52px;background:#fff;border-radius:4px;box-shadow:0 2px 3px rgba(0,0,0,0.25);"></div>
<div style="position:absolute;left:860px;top:725.5px;width:26px;height:1px;background:#D3DAE6"></div>
<svg style="left:860px;top:700px" width="26" height="52" viewBox="0 0 26 52" fill="#333"><path d="M13 7.5L19 11.8 17 18.5H9L7 11.8Z"/><rect x="8" y="34" width="10" height="10"/></svg>
<div style="position:absolute;left:698px;top:805px;width:116px;height:116px;background:rgba(255,255,255,0.55);border-radius:4px;box-shadow:0 1px 4px rgba(0,0,0,0.15)"></div>
<div class="t" style="left:706.8px;top:814.32px;font-size:11.2px;color:#535966;font-weight:bold;">Count</div>
<svg style="left:705.8px;top:831.1px" width="10" height="10"><circle cx="5" cy="5" r="4.4" fill="#FFD96B" stroke="#C9A33E" stroke-width="0.9"/></svg>
<div class="t" style="left:720.7px;top:830.70px;font-size:11.1px;color:#535966;">1 – 2,054.2</div>
<svg style="left:705.8px;top:848.1px" width="10" height="10"><circle cx="5" cy="5" r="4.4" fill="#FE9C43" stroke="#C06D2B" stroke-width="0.9"/></svg>
<div class="t" style="left:720.7px;top:847.70px;font-size:11.1px;color:#535966;">2,054.2 – 4,107.4</div>
<svg style="left:705.8px;top:865.1px" width="10" height="10"><circle cx="5" cy="5" r="4.4" fill="#FC4A2C" stroke="#B8311D" stroke-width="0.9"/></svg>
<div class="t" style="left:720.7px;top:864.70px;font-size:11.1px;color:#535966;">4,107.4 – 6,160.6</div>
<svg style="left:705.8px;top:882.1px" width="10" height="10"><circle cx="5" cy="5" r="4.4" fill="#D91A24" stroke="#951117" stroke-width="0.9"/></svg>
<div class="t" style="left:720.7px;top:881.70px;font-size:11.1px;color:#535966;">6,160.6 – 8,213.8</div>
<svg style="left:705.8px;top:899.1px" width="10" height="10"><circle cx="5" cy="5" r="4.4" fill="#7D0A22" stroke="#3E0510" stroke-width="0.9"/></svg>
<div class="t" style="left:720.7px;top:898.70px;font-size:11.1px;color:#535966;">8,213.8 – 10,267</div>
<div style="position:absolute;left:1351px;top:805px;width:116px;height:116px;background:rgba(255,255,255,0.55);border-radius:4px;box-shadow:0 1px 4px rgba(0,0,0,0.15)"></div>
<div class="t" style="left:1359.8px;top:814.32px;font-size:11.2px;color:#535966;font-weight:bold;">Count</div>
<svg style="left:1358.8px;top:831.1px" width="10" height="10"><circle cx="5" cy="5" r="4.4" fill="#FFD96B" stroke="#C9A33E" stroke-width="0.9"/></svg>
<div class="t" style="left:1373.7px;top:830.70px;font-size:11.1px;color:#535966;">1 – 2,222.8</div>
<svg style="left:1358.8px;top:848.1px" width="10" height="10"><circle cx="5" cy="5" r="4.4" fill="#FE9C43" stroke="#C06D2B" stroke-width="0.9"/></svg>
<div class="t" style="left:1373.7px;top:847.70px;font-size:11.1px;color:#535966;">2,222.8 – 4,444.6</div>
<svg style="left:1358.8px;top:865.1px" width="10" height="10"><circle cx="5" cy="5" r="4.4" fill="#FC4A2C" stroke="#B8311D" stroke-width="0.9"/></svg>
<div class="t" style="left:1373.7px;top:864.70px;font-size:11.1px;color:#535966;">4,444.6 – 6,666.4</div>
<svg style="left:1358.8px;top:882.1px" width="10" height="10"><circle cx="5" cy="5" r="4.4" fill="#D91A24" stroke="#951117" stroke-width="0.9"/></svg>
<div class="t" style="left:1373.7px;top:881.70px;font-size:11.1px;color:#535966;">6,666.4 – 8,888.2</div>
<svg style="left:1358.8px;top:899.1px" width="10" height="10"><circle cx="5" cy="5" r="4.4" fill="#7D0A22" stroke="#3E0510" stroke-width="0.9"/></svg>
<div class="t" style="left:1373.7px;top:898.70px;font-size:11.1px;color:#535966;">8,888.2 – 11,110</div>
<div style="position:absolute;left:552px;top:932px;width:272px;height:15px;background:rgba(255,255,255,0.72)"></div>
<div class="t" style="right:671px;top:934.10px;font-size:11.1px;color:#333333;">© OpenStreetMap contributors, Elastic Maps Service</div>
<div style="position:absolute;left:1205px;top:932px;width:272px;height:15px;background:rgba(255,255,255,0.72)"></div>
<div class="t" style="right:18px;top:934.10px;font-size:11.1px;color:#333333;">© OpenStreetMap contributors, Elastic Maps Service</div>
</body></html>
